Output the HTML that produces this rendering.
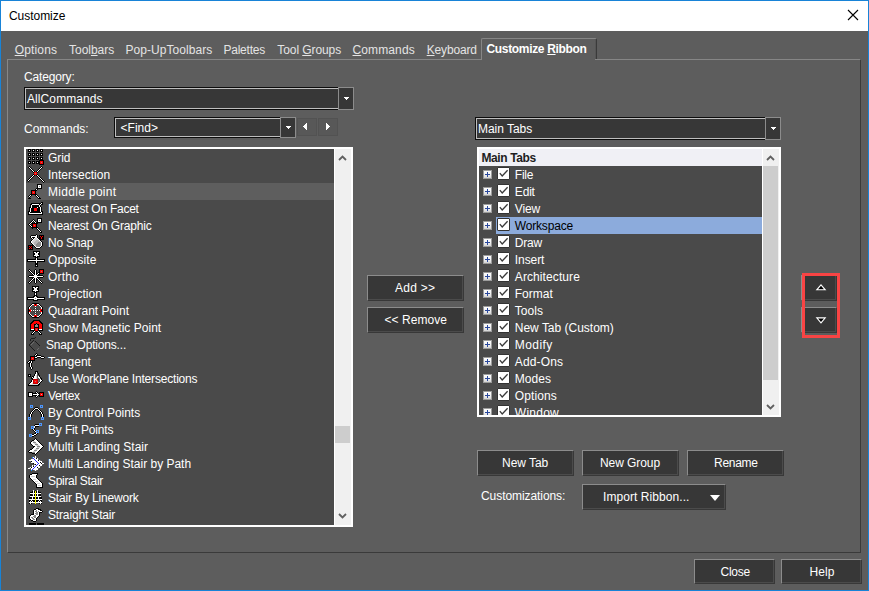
<!DOCTYPE html>
<html lang="en"><head><meta charset="utf-8"><title>Customize</title>
<style>
html,body{margin:0;padding:0;}
body{width:869px;height:591px;overflow:hidden;background:#5d5d5d;position:relative;
 font-family:"Liberation Sans",sans-serif;font-size:12px;color:#fff;}
*{box-sizing:border-box;}
.abs{position:absolute;}
.tx{position:absolute;white-space:nowrap;line-height:17px;height:17px;}
u{text-decoration:underline;text-underline-offset:1px;text-decoration-thickness:1px;}
.win{position:absolute;left:0;top:0;width:869px;height:591px;border:1px solid #1883d7;pointer-events:none;}
.title{position:absolute;left:1px;top:1px;width:867px;height:30px;background:#fff;color:#000;}
.combo{position:absolute;background:#373737;border:1px solid #0c0c0c;box-shadow:inset 0 0 0 1px #bebebe;}
.cbtn{position:absolute;background:#373737;border:1px solid #8c8c8c;}
.btn{position:absolute;background:#373737;border-style:solid;border-width:1px;border-color:#8c8c8c #383838 #383838 #8c8c8c;box-shadow:inset -1px -1px 0 #4b4b4b;}
.list{position:absolute;background:#4a4a4a;border:2px solid #fff;overflow:hidden;}
.row{position:absolute;left:0;height:17px;}
.sb{position:absolute;background:#f0f0f0;width:17px;box-shadow:inset 1px 0 0 #fff;}
.thumb{position:absolute;background:#cdcdcd;}
.tab{color:#e4e4e4;}
svg{position:absolute;overflow:visible;}
.ic{position:absolute;width:16px;height:16px;left:2px;top:0;}
.pm{position:absolute;width:9px;height:9px;border:1px solid #9c9c9c;background:linear-gradient(180deg,#fdfdfd 0%,#f0f0f0 55%,#d4d4d4 100%);}
.pm:before{content:"";position:absolute;left:1px;top:3px;width:5px;height:1px;background:#2a489c;}
.pm:after{content:"";position:absolute;left:3px;top:1px;width:1px;height:5px;background:#2a489c;}
.cb{position:absolute;width:13px;height:13px;border:1px solid #333;background:#fff;border-radius:1px;}
</style></head><body>

<div class="title"></div>
<span id="t1" class="tx " style="left:9px;top:8px;color:#000;letter-spacing:-0.044px;">Customize</span>
<svg style="left:848px;top:10px" width="10" height="10" viewBox="0 0 10 10"><path d="M0 0L10 10M10 0L0 10" stroke="#000" stroke-width="1.1" fill="none"/></svg>
<div class="abs" style="left:7px;top:59px;width:854px;height:494px;border-style:solid;border-width:1px;border-color:#868686 #3a3a3a #3a3a3a #868686;"></div>
<span id="t2" class="tx tab" style="left:14.7px;top:42px;letter-spacing:0.161px;"><u>O</u>ptions</span>
<span id="t3" class="tx tab" style="left:69.1px;top:42px;letter-spacing:-0.047px;">Tool<u>b</u>ars</span>
<span id="t4" class="tx tab" style="left:125.5px;top:42px;letter-spacing:0.060px;">Pop-UpToolbars</span>
<span id="t5" class="tx tab" style="left:223.4px;top:42px;letter-spacing:-0.208px;">Palettes</span>
<span id="t6" class="tx tab" style="left:277.3px;top:42px;letter-spacing:-0.083px;">Tool <u>G</u>roups</span>
<span id="t7" class="tx tab" style="left:352.5px;top:42px;letter-spacing:0.116px;"><u>C</u>ommands</span>
<span id="t8" class="tx tab" style="left:426.7px;top:42px;letter-spacing:-0.161px;"><u>K</u>eyboard</span>
<div class="abs" style="left:481px;top:38px;width:116px;height:21px;background:#5d5d5d;border-style:solid;border-width:1px 1px 0 1px;border-color:#868686 #3a3a3a #5d5d5d #868686;border-radius:2px 2px 0 0;box-shadow:inset -1px 0 0 #555;"></div>
<div class="abs" style="left:482px;top:59px;width:113px;height:1px;background:#5d5d5d;"></div>
<span id="t9" class="tx " style="left:486.5px;top:41px;font-weight:bold;letter-spacing:-0.329px;">Customize <u>R</u>ibbon</span>
<span id="t10" class="tx " style="left:24px;top:69px;letter-spacing:-0.160px;">Category:</span>
<div class="combo" style="left:24px;top:87px;width:322px;height:23px;"></div>
<span id="t11" class="tx " style="left:27px;top:91px;letter-spacing:0.092px;">AllCommands</span>
<div class="cbtn" style="left:338px;top:87px;width:16px;height:23px;"></div>
<svg style="left:344px;top:97px" width="5" height="3" viewBox="0 0 5 3" shape-rendering="crispEdges"><path d="M0 0H5V1H4V2H3V3H2V2H1V1H0Z" fill="#fff"/></svg>
<span id="t12" class="tx " style="left:24px;top:121px;letter-spacing:0.001px;">Commands:</span>
<div class="combo" style="left:114px;top:117px;width:174px;height:21px;"></div>
<span id="t13" class="tx " style="left:120.5px;top:120px;letter-spacing:0.039px;">&lt;Find&gt;</span>
<div class="cbtn" style="left:280px;top:117px;width:16px;height:21px;"></div>
<svg style="left:286px;top:126px" width="5" height="3" viewBox="0 0 5 3" shape-rendering="crispEdges"><path d="M0 0H5V1H4V2H3V3H2V2H1V1H0Z" fill="#fff"/></svg>
<div class="abs" style="left:297px;top:118px;width:20px;height:18px;background:#585858;border:1px solid #525252;"></div>
<div class="abs" style="left:318px;top:118px;width:20px;height:18px;background:#585858;border:1px solid #525252;"></div>
<svg style="left:303px;top:123px" width="4" height="7" viewBox="0 0 4 7" shape-rendering="crispEdges"><path d="M4 0V7H3V6H2V5H1V4H0V3H1V2H2V1H3V0Z" fill="#fff"/></svg>
<svg style="left:326px;top:123px" width="4" height="7" viewBox="0 0 4 7" shape-rendering="crispEdges"><path d="M0 0V7H1V6H2V5H3V4H4V3H3V2H2V1H1V0Z" fill="#fff"/></svg>
<div class="list" style="left:24px;top:147px;width:329px;height:380px;">
<div class="row" style="top:0px;width:308px;">
<div class="ic"><svg style="left:0;top:0" width="16" height="17" viewBox="0 0 16 17" shape-rendering="crispEdges"><rect x="0" y="0" width="3" height="1" fill="#000"/><rect x="4" y="0" width="3" height="1" fill="#000"/><rect x="8" y="0" width="3" height="1" fill="#000"/><rect x="12" y="0" width="3" height="1" fill="#000"/><rect x="0" y="1" width="1" height="1" fill="#000"/><rect x="1" y="1" width="1" height="1" fill="#fff"/><rect x="2" y="1" width="1" height="1" fill="#000"/><rect x="4" y="1" width="1" height="1" fill="#000"/><rect x="5" y="1" width="1" height="1" fill="#fff"/><rect x="6" y="1" width="1" height="1" fill="#000"/><rect x="8" y="1" width="1" height="1" fill="#000"/><rect x="9" y="1" width="1" height="1" fill="#fff"/><rect x="10" y="1" width="1" height="1" fill="#000"/><rect x="12" y="1" width="1" height="1" fill="#000"/><rect x="13" y="1" width="1" height="1" fill="#fff"/><rect x="14" y="1" width="1" height="1" fill="#000"/><rect x="0" y="2" width="3" height="1" fill="#000"/><rect x="4" y="2" width="3" height="1" fill="#000"/><rect x="8" y="2" width="3" height="1" fill="#000"/><rect x="12" y="2" width="3" height="1" fill="#000"/><rect x="0" y="4" width="3" height="1" fill="#000"/><rect x="4" y="4" width="3" height="1" fill="#000"/><rect x="8" y="4" width="3" height="1" fill="#000"/><rect x="12" y="4" width="3" height="1" fill="#000"/><rect x="0" y="5" width="1" height="1" fill="#000"/><rect x="1" y="5" width="1" height="1" fill="#fff"/><rect x="2" y="5" width="1" height="1" fill="#000"/><rect x="4" y="5" width="1" height="1" fill="#000"/><rect x="5" y="5" width="1" height="1" fill="#fff"/><rect x="6" y="5" width="1" height="1" fill="#000"/><rect x="8" y="5" width="1" height="1" fill="#000"/><rect x="9" y="5" width="1" height="1" fill="#fff"/><rect x="10" y="5" width="1" height="1" fill="#000"/><rect x="12" y="5" width="1" height="1" fill="#000"/><rect x="13" y="5" width="1" height="1" fill="#fff"/><rect x="14" y="5" width="1" height="1" fill="#000"/><rect x="0" y="6" width="3" height="1" fill="#000"/><rect x="4" y="6" width="3" height="1" fill="#000"/><rect x="8" y="6" width="3" height="1" fill="#000"/><rect x="12" y="6" width="3" height="1" fill="#000"/><rect x="0" y="8" width="3" height="1" fill="#000"/><rect x="4" y="8" width="3" height="1" fill="#000"/><rect x="8" y="8" width="3" height="1" fill="#000"/><rect x="12" y="8" width="3" height="1" fill="#000"/><rect x="0" y="9" width="1" height="1" fill="#000"/><rect x="1" y="9" width="1" height="1" fill="#fff"/><rect x="2" y="9" width="1" height="1" fill="#000"/><rect x="4" y="9" width="1" height="1" fill="#000"/><rect x="5" y="9" width="1" height="1" fill="#fff"/><rect x="6" y="9" width="1" height="1" fill="#000"/><rect x="8" y="9" width="1" height="1" fill="#000"/><rect x="9" y="9" width="1" height="1" fill="#fff"/><rect x="10" y="9" width="1" height="1" fill="#000"/><rect x="12" y="9" width="1" height="1" fill="#000"/><rect x="13" y="9" width="1" height="1" fill="#fff"/><rect x="14" y="9" width="1" height="1" fill="#000"/><rect x="0" y="10" width="3" height="1" fill="#000"/><rect x="4" y="10" width="3" height="1" fill="#000"/><rect x="8" y="10" width="3" height="1" fill="#000"/><rect x="12" y="10" width="3" height="1" fill="#000"/><rect x="11" y="11" width="5" height="1" fill="#000"/><rect x="0" y="12" width="3" height="1" fill="#000"/><rect x="4" y="12" width="3" height="1" fill="#000"/><rect x="8" y="12" width="4" height="1" fill="#000"/><rect x="12" y="12" width="3" height="1" fill="#f00"/><rect x="15" y="12" width="1" height="1" fill="#000"/><rect x="0" y="13" width="1" height="1" fill="#000"/><rect x="1" y="13" width="1" height="1" fill="#fff"/><rect x="2" y="13" width="1" height="1" fill="#000"/><rect x="4" y="13" width="1" height="1" fill="#000"/><rect x="5" y="13" width="1" height="1" fill="#fff"/><rect x="6" y="13" width="1" height="1" fill="#000"/><rect x="8" y="13" width="1" height="1" fill="#000"/><rect x="9" y="13" width="1" height="1" fill="#fff"/><rect x="10" y="13" width="2" height="1" fill="#000"/><rect x="12" y="13" width="1" height="1" fill="#f00"/><rect x="13" y="13" width="1" height="1" fill="#8a8a8a"/><rect x="14" y="13" width="1" height="1" fill="#f00"/><rect x="15" y="13" width="1" height="1" fill="#000"/><rect x="0" y="14" width="3" height="1" fill="#000"/><rect x="4" y="14" width="3" height="1" fill="#000"/><rect x="8" y="14" width="4" height="1" fill="#000"/><rect x="12" y="14" width="3" height="1" fill="#f00"/><rect x="15" y="14" width="1" height="1" fill="#000"/><rect x="11" y="15" width="5" height="1" fill="#000"/></svg></div>
<span id="t14" class="tx " style="left:22.0px;top:1px;letter-spacing:-0.096px;">Grid</span>
</div>
<div class="row" style="top:17px;width:308px;">
<div class="ic"><svg style="left:0;top:0" width="16" height="17" viewBox="0 0 16 17" shape-rendering="crispEdges"><rect x="1" y="0" width="1" height="1" fill="#000"/><rect x="13" y="0" width="1" height="1" fill="#000"/><rect x="0" y="1" width="1" height="1" fill="#000"/><rect x="1" y="1" width="1" height="1" fill="#fff"/><rect x="2" y="1" width="1" height="1" fill="#000"/><rect x="12" y="1" width="1" height="1" fill="#000"/><rect x="13" y="1" width="1" height="1" fill="#fff"/><rect x="14" y="1" width="1" height="1" fill="#000"/><rect x="1" y="2" width="1" height="1" fill="#000"/><rect x="2" y="2" width="1" height="1" fill="#fff"/><rect x="3" y="2" width="1" height="1" fill="#000"/><rect x="11" y="2" width="1" height="1" fill="#000"/><rect x="12" y="2" width="1" height="1" fill="#fff"/><rect x="13" y="2" width="1" height="1" fill="#000"/><rect x="2" y="3" width="1" height="1" fill="#000"/><rect x="3" y="3" width="1" height="1" fill="#fff"/><rect x="4" y="3" width="1" height="1" fill="#000"/><rect x="10" y="3" width="1" height="1" fill="#000"/><rect x="11" y="3" width="1" height="1" fill="#fff"/><rect x="12" y="3" width="1" height="1" fill="#000"/><rect x="3" y="4" width="1" height="1" fill="#000"/><rect x="4" y="4" width="1" height="1" fill="#fff"/><rect x="5" y="4" width="1" height="1" fill="#000"/><rect x="9" y="4" width="1" height="1" fill="#000"/><rect x="10" y="4" width="1" height="1" fill="#fff"/><rect x="11" y="4" width="1" height="1" fill="#000"/><rect x="4" y="5" width="1" height="1" fill="#000"/><rect x="5" y="5" width="1" height="1" fill="#fff"/><rect x="6" y="5" width="1" height="1" fill="#000"/><rect x="8" y="5" width="1" height="1" fill="#000"/><rect x="9" y="5" width="1" height="1" fill="#fff"/><rect x="10" y="5" width="1" height="1" fill="#000"/><rect x="5" y="6" width="1" height="1" fill="#000"/><rect x="6" y="6" width="3" height="1" fill="#f00"/><rect x="9" y="6" width="1" height="1" fill="#000"/><rect x="6" y="7" width="1" height="1" fill="#f00"/><rect x="7" y="7" width="1" height="1" fill="#8a8a8a"/><rect x="8" y="7" width="1" height="1" fill="#f00"/><rect x="5" y="8" width="1" height="1" fill="#000"/><rect x="6" y="8" width="3" height="1" fill="#f00"/><rect x="9" y="8" width="1" height="1" fill="#000"/><rect x="4" y="9" width="1" height="1" fill="#000"/><rect x="5" y="9" width="1" height="1" fill="#fff"/><rect x="6" y="9" width="1" height="1" fill="#000"/><rect x="8" y="9" width="1" height="1" fill="#000"/><rect x="9" y="9" width="1" height="1" fill="#fff"/><rect x="10" y="9" width="1" height="1" fill="#000"/><rect x="3" y="10" width="1" height="1" fill="#000"/><rect x="4" y="10" width="1" height="1" fill="#fff"/><rect x="5" y="10" width="1" height="1" fill="#000"/><rect x="9" y="10" width="1" height="1" fill="#000"/><rect x="10" y="10" width="1" height="1" fill="#fff"/><rect x="11" y="10" width="1" height="1" fill="#000"/><rect x="2" y="11" width="1" height="1" fill="#000"/><rect x="3" y="11" width="1" height="1" fill="#fff"/><rect x="4" y="11" width="1" height="1" fill="#000"/><rect x="10" y="11" width="1" height="1" fill="#000"/><rect x="11" y="11" width="1" height="1" fill="#fff"/><rect x="12" y="11" width="1" height="1" fill="#000"/><rect x="1" y="12" width="1" height="1" fill="#000"/><rect x="2" y="12" width="1" height="1" fill="#fff"/><rect x="3" y="12" width="1" height="1" fill="#000"/><rect x="11" y="12" width="1" height="1" fill="#000"/><rect x="12" y="12" width="1" height="1" fill="#fff"/><rect x="13" y="12" width="1" height="1" fill="#000"/><rect x="0" y="13" width="1" height="1" fill="#000"/><rect x="1" y="13" width="1" height="1" fill="#fff"/><rect x="2" y="13" width="1" height="1" fill="#000"/><rect x="12" y="13" width="1" height="1" fill="#000"/><rect x="13" y="13" width="1" height="1" fill="#fff"/><rect x="14" y="13" width="1" height="1" fill="#000"/><rect x="-1" y="14" width="1" height="1" fill="#000"/><rect x="0" y="14" width="1" height="1" fill="#fff"/><rect x="1" y="14" width="1" height="1" fill="#000"/><rect x="13" y="14" width="1" height="1" fill="#000"/><rect x="14" y="14" width="1" height="1" fill="#fff"/><rect x="15" y="14" width="1" height="1" fill="#000"/><rect x="0" y="15" width="1" height="1" fill="#000"/><rect x="14" y="15" width="1" height="1" fill="#000"/><rect x="15" y="15" width="1" height="1" fill="#fff"/><rect x="16" y="15" width="1" height="1" fill="#000"/><rect x="15" y="16" width="1" height="1" fill="#000"/></svg></div>
<span id="t15" class="tx " style="left:22.0px;top:1px;letter-spacing:0.005px;">Intersection</span>
</div>
<div class="row" style="top:34px;width:308px;background:#5e5e5e;">
<div class="ic"><svg style="left:0;top:0" width="16" height="17" viewBox="0 0 16 17" shape-rendering="crispEdges"><rect x="9" y="1" width="5" height="1" fill="#000"/><rect x="9" y="2" width="1" height="1" fill="#000"/><rect x="10" y="2" width="3" height="1" fill="#fff"/><rect x="13" y="2" width="1" height="1" fill="#000"/><rect x="9" y="3" width="1" height="1" fill="#000"/><rect x="10" y="3" width="1" height="1" fill="#fff"/><rect x="11" y="3" width="1" height="1" fill="#8a8a8a"/><rect x="12" y="3" width="1" height="1" fill="#fff"/><rect x="13" y="3" width="1" height="1" fill="#000"/><rect x="9" y="4" width="1" height="1" fill="#000"/><rect x="10" y="4" width="3" height="1" fill="#fff"/><rect x="13" y="4" width="1" height="1" fill="#000"/><rect x="8" y="5" width="6" height="1" fill="#000"/><rect x="7" y="6" width="1" height="1" fill="#000"/><rect x="8" y="6" width="1" height="1" fill="#fff"/><rect x="9" y="6" width="1" height="1" fill="#000"/><rect x="3" y="7" width="6" height="1" fill="#000"/><rect x="3" y="8" width="1" height="1" fill="#000"/><rect x="4" y="8" width="3" height="1" fill="#f00"/><rect x="7" y="8" width="1" height="1" fill="#000"/><rect x="3" y="9" width="1" height="1" fill="#000"/><rect x="4" y="9" width="1" height="1" fill="#f00"/><rect x="5" y="9" width="1" height="1" fill="#8a8a8a"/><rect x="6" y="9" width="1" height="1" fill="#f00"/><rect x="7" y="9" width="1" height="1" fill="#000"/><rect x="3" y="10" width="1" height="1" fill="#000"/><rect x="4" y="10" width="3" height="1" fill="#f00"/><rect x="7" y="10" width="1" height="1" fill="#000"/><rect x="2" y="11" width="7" height="1" fill="#000"/><rect x="1" y="12" width="1" height="1" fill="#000"/><rect x="2" y="12" width="1" height="1" fill="#fff"/><rect x="3" y="12" width="1" height="1" fill="#000"/><rect x="7" y="12" width="1" height="1" fill="#000"/><rect x="8" y="12" width="1" height="1" fill="#fff"/><rect x="9" y="12" width="1" height="1" fill="#000"/><rect x="0" y="13" width="1" height="1" fill="#000"/><rect x="1" y="13" width="1" height="1" fill="#fff"/><rect x="2" y="13" width="1" height="1" fill="#000"/><rect x="8" y="13" width="1" height="1" fill="#000"/><rect x="9" y="13" width="1" height="1" fill="#fff"/><rect x="10" y="13" width="1" height="1" fill="#000"/><rect x="1" y="14" width="1" height="1" fill="#000"/><rect x="9" y="14" width="1" height="1" fill="#000"/><rect x="10" y="14" width="1" height="1" fill="#fff"/><rect x="11" y="14" width="1" height="1" fill="#000"/><rect x="0" y="15" width="3" height="1" fill="#000"/><rect x="10" y="15" width="3" height="1" fill="#000"/></svg></div>
<span id="t16" class="tx " style="left:22.0px;top:1px;letter-spacing:0.315px;">Middle point</span>
</div>
<div class="row" style="top:51px;width:308px;">
<div class="ic"><svg style="left:0;top:0" width="16" height="17" viewBox="0 0 16 17" shape-rendering="crispEdges"><rect x="13" y="2" width="2" height="1" fill="#000"/><rect x="3" y="3" width="10" height="1" fill="#000"/><rect x="13" y="3" width="1" height="1" fill="#fff"/><rect x="14" y="3" width="1" height="1" fill="#000"/><rect x="2" y="4" width="2" height="1" fill="#000"/><rect x="4" y="4" width="7" height="1" fill="#fff"/><rect x="11" y="4" width="1" height="1" fill="#000"/><rect x="12" y="4" width="1" height="1" fill="#fff"/><rect x="13" y="4" width="2" height="1" fill="#000"/><rect x="2" y="5" width="1" height="1" fill="#000"/><rect x="3" y="5" width="1" height="1" fill="#fff"/><rect x="4" y="5" width="7" height="1" fill="#000"/><rect x="11" y="5" width="1" height="1" fill="#fff"/><rect x="12" y="5" width="1" height="1" fill="#000"/><rect x="2" y="6" width="1" height="1" fill="#000"/><rect x="3" y="6" width="1" height="1" fill="#fff"/><rect x="4" y="6" width="7" height="1" fill="#000"/><rect x="11" y="6" width="1" height="1" fill="#fff"/><rect x="12" y="6" width="1" height="1" fill="#000"/><rect x="1" y="7" width="2" height="1" fill="#000"/><rect x="3" y="7" width="1" height="1" fill="#fff"/><rect x="4" y="7" width="5" height="1" fill="#000"/><rect x="9" y="7" width="1" height="1" fill="#fff"/><rect x="10" y="7" width="2" height="1" fill="#000"/><rect x="12" y="7" width="1" height="1" fill="#fff"/><rect x="13" y="7" width="1" height="1" fill="#000"/><rect x="1" y="8" width="1" height="1" fill="#000"/><rect x="2" y="8" width="1" height="1" fill="#fff"/><rect x="3" y="8" width="3" height="1" fill="#000"/><rect x="6" y="8" width="3" height="1" fill="#f00"/><rect x="9" y="8" width="3" height="1" fill="#000"/><rect x="12" y="8" width="1" height="1" fill="#fff"/><rect x="13" y="8" width="1" height="1" fill="#000"/><rect x="1" y="9" width="1" height="1" fill="#000"/><rect x="2" y="9" width="1" height="1" fill="#fff"/><rect x="3" y="9" width="3" height="1" fill="#000"/><rect x="6" y="9" width="3" height="1" fill="#f00"/><rect x="9" y="9" width="3" height="1" fill="#000"/><rect x="12" y="9" width="1" height="1" fill="#fff"/><rect x="13" y="9" width="1" height="1" fill="#000"/><rect x="1" y="10" width="1" height="1" fill="#000"/><rect x="2" y="10" width="1" height="1" fill="#fff"/><rect x="3" y="10" width="3" height="1" fill="#000"/><rect x="6" y="10" width="3" height="1" fill="#f00"/><rect x="9" y="10" width="3" height="1" fill="#000"/><rect x="12" y="10" width="1" height="1" fill="#fff"/><rect x="13" y="10" width="1" height="1" fill="#000"/><rect x="0" y="11" width="2" height="1" fill="#000"/><rect x="2" y="11" width="1" height="1" fill="#fff"/><rect x="3" y="11" width="9" height="1" fill="#000"/><rect x="12" y="11" width="1" height="1" fill="#fff"/><rect x="13" y="11" width="2" height="1" fill="#000"/><rect x="0" y="12" width="1" height="1" fill="#000"/><rect x="1" y="12" width="1" height="1" fill="#fff"/><rect x="2" y="12" width="11" height="1" fill="#000"/><rect x="13" y="12" width="1" height="1" fill="#fff"/><rect x="14" y="12" width="1" height="1" fill="#000"/><rect x="0" y="13" width="1" height="1" fill="#000"/><rect x="1" y="13" width="13" height="1" fill="#fff"/><rect x="14" y="13" width="1" height="1" fill="#000"/><rect x="0" y="14" width="15" height="1" fill="#000"/></svg></div>
<span id="t17" class="tx " style="left:22.0px;top:1px;letter-spacing:-0.250px;">Nearest On Facet</span>
</div>
<div class="row" style="top:68px;width:308px;">
<div class="ic"><svg style="left:0;top:0" width="16" height="17" viewBox="0 0 16 17" shape-rendering="crispEdges"><rect x="9" y="1" width="5" height="1" fill="#000"/><rect x="5" y="2" width="1" height="1" fill="#000"/><rect x="9" y="2" width="1" height="1" fill="#000"/><rect x="10" y="2" width="3" height="1" fill="#fff"/><rect x="13" y="2" width="1" height="1" fill="#000"/><rect x="4" y="3" width="1" height="1" fill="#000"/><rect x="5" y="3" width="1" height="1" fill="#fff"/><rect x="6" y="3" width="1" height="1" fill="#000"/><rect x="9" y="3" width="1" height="1" fill="#000"/><rect x="10" y="3" width="1" height="1" fill="#fff"/><rect x="11" y="3" width="1" height="1" fill="#8a8a8a"/><rect x="12" y="3" width="1" height="1" fill="#fff"/><rect x="13" y="3" width="1" height="1" fill="#000"/><rect x="3" y="4" width="1" height="1" fill="#000"/><rect x="4" y="4" width="1" height="1" fill="#fff"/><rect x="5" y="4" width="1" height="1" fill="#000"/><rect x="6" y="4" width="1" height="1" fill="#fff"/><rect x="7" y="4" width="1" height="1" fill="#000"/><rect x="9" y="4" width="1" height="1" fill="#000"/><rect x="10" y="4" width="3" height="1" fill="#fff"/><rect x="13" y="4" width="1" height="1" fill="#000"/><rect x="2" y="5" width="1" height="1" fill="#000"/><rect x="3" y="5" width="1" height="1" fill="#fff"/><rect x="4" y="5" width="1" height="1" fill="#000"/><rect x="6" y="5" width="1" height="1" fill="#000"/><rect x="7" y="5" width="1" height="1" fill="#fff"/><rect x="8" y="5" width="6" height="1" fill="#000"/><rect x="1" y="6" width="1" height="1" fill="#000"/><rect x="2" y="6" width="1" height="1" fill="#fff"/><rect x="3" y="6" width="7" height="1" fill="#000"/><rect x="0" y="7" width="1" height="1" fill="#000"/><rect x="1" y="7" width="1" height="1" fill="#fff"/><rect x="2" y="7" width="1" height="1" fill="#000"/><rect x="4" y="7" width="1" height="1" fill="#000"/><rect x="5" y="7" width="3" height="1" fill="#f00"/><rect x="8" y="7" width="1" height="1" fill="#000"/><rect x="1" y="8" width="1" height="1" fill="#000"/><rect x="2" y="8" width="1" height="1" fill="#fff"/><rect x="3" y="8" width="2" height="1" fill="#000"/><rect x="5" y="8" width="1" height="1" fill="#f00"/><rect x="6" y="8" width="1" height="1" fill="#8a8a8a"/><rect x="7" y="8" width="1" height="1" fill="#f00"/><rect x="8" y="8" width="1" height="1" fill="#000"/><rect x="2" y="9" width="1" height="1" fill="#000"/><rect x="3" y="9" width="1" height="1" fill="#fff"/><rect x="4" y="9" width="1" height="1" fill="#000"/><rect x="5" y="9" width="3" height="1" fill="#f00"/><rect x="8" y="9" width="1" height="1" fill="#000"/><rect x="3" y="10" width="7" height="1" fill="#000"/><rect x="4" y="11" width="1" height="1" fill="#000"/><rect x="8" y="11" width="1" height="1" fill="#000"/><rect x="9" y="11" width="1" height="1" fill="#fff"/><rect x="10" y="11" width="1" height="1" fill="#000"/><rect x="9" y="12" width="1" height="1" fill="#000"/><rect x="10" y="12" width="1" height="1" fill="#fff"/><rect x="11" y="12" width="1" height="1" fill="#000"/><rect x="10" y="13" width="1" height="1" fill="#000"/><rect x="11" y="13" width="1" height="1" fill="#fff"/><rect x="12" y="13" width="1" height="1" fill="#000"/><rect x="11" y="14" width="1" height="1" fill="#000"/><rect x="12" y="14" width="1" height="1" fill="#fff"/><rect x="13" y="14" width="1" height="1" fill="#000"/><rect x="12" y="15" width="2" height="1" fill="#000"/></svg></div>
<span id="t18" class="tx " style="left:22.0px;top:1px;letter-spacing:-0.179px;">Nearest On Graphic</span>
</div>
<div class="row" style="top:85px;width:308px;">
<div class="ic"><svg style="left:0;top:0" width="16" height="17" viewBox="0 0 16 17" shape-rendering="crispEdges"><rect x="8" y="0" width="1" height="1" fill="#000"/><rect x="3" y="1" width="5" height="1" fill="#000"/><rect x="8" y="1" width="1" height="1" fill="#fff"/><rect x="9" y="1" width="1" height="1" fill="#000"/><rect x="11" y="1" width="5" height="1" fill="#000"/><rect x="2" y="2" width="1" height="1" fill="#000"/><rect x="3" y="2" width="6" height="1" fill="#fff"/><rect x="9" y="2" width="1" height="1" fill="#000"/><rect x="11" y="2" width="1" height="1" fill="#000"/><rect x="12" y="2" width="1" height="1" fill="#f00"/><rect x="13" y="2" width="1" height="1" fill="#000"/><rect x="14" y="2" width="1" height="1" fill="#f00"/><rect x="15" y="2" width="1" height="1" fill="#000"/><rect x="2" y="3" width="1" height="1" fill="#000"/><rect x="3" y="3" width="1" height="1" fill="#fff"/><rect x="4" y="3" width="3" height="1" fill="#000"/><rect x="7" y="3" width="2" height="1" fill="#fff"/><rect x="9" y="3" width="1" height="1" fill="#000"/><rect x="11" y="3" width="2" height="1" fill="#000"/><rect x="13" y="3" width="1" height="1" fill="#f00"/><rect x="14" y="3" width="2" height="1" fill="#000"/><rect x="3" y="4" width="1" height="1" fill="#000"/><rect x="4" y="4" width="1" height="1" fill="#fff"/><rect x="5" y="4" width="1" height="1" fill="#000"/><rect x="6" y="4" width="1" height="1" fill="#fff"/><rect x="7" y="4" width="2" height="1" fill="#d2d2d2"/><rect x="9" y="4" width="1" height="1" fill="#fff"/><rect x="10" y="4" width="3" height="1" fill="#000"/><rect x="13" y="4" width="1" height="1" fill="#f00"/><rect x="14" y="4" width="2" height="1" fill="#000"/><rect x="4" y="5" width="1" height="1" fill="#000"/><rect x="5" y="5" width="1" height="1" fill="#fff"/><rect x="6" y="5" width="4" height="1" fill="#d2d2d2"/><rect x="10" y="5" width="1" height="1" fill="#fff"/><rect x="11" y="5" width="5" height="1" fill="#000"/><rect x="3" y="6" width="1" height="1" fill="#000"/><rect x="4" y="6" width="1" height="1" fill="#fff"/><rect x="5" y="6" width="3" height="1" fill="#d2d2d2"/><rect x="8" y="6" width="3" height="1" fill="#b4b4b4"/><rect x="11" y="6" width="1" height="1" fill="#fff"/><rect x="12" y="6" width="1" height="1" fill="#000"/><rect x="2" y="7" width="1" height="1" fill="#000"/><rect x="3" y="7" width="1" height="1" fill="#fff"/><rect x="4" y="7" width="3" height="1" fill="#d2d2d2"/><rect x="7" y="7" width="5" height="1" fill="#b4b4b4"/><rect x="12" y="7" width="1" height="1" fill="#fff"/><rect x="13" y="7" width="1" height="1" fill="#000"/><rect x="2" y="8" width="1" height="1" fill="#000"/><rect x="3" y="8" width="1" height="1" fill="#fff"/><rect x="4" y="8" width="2" height="1" fill="#d2d2d2"/><rect x="6" y="8" width="4" height="1" fill="#b4b4b4"/><rect x="10" y="8" width="3" height="1" fill="#8a8a8a"/><rect x="13" y="8" width="1" height="1" fill="#fff"/><rect x="14" y="8" width="1" height="1" fill="#000"/><rect x="3" y="9" width="1" height="1" fill="#000"/><rect x="4" y="9" width="1" height="1" fill="#fff"/><rect x="5" y="9" width="1" height="1" fill="#d2d2d2"/><rect x="6" y="9" width="3" height="1" fill="#b4b4b4"/><rect x="9" y="9" width="4" height="1" fill="#8a8a8a"/><rect x="13" y="9" width="1" height="1" fill="#fff"/><rect x="14" y="9" width="1" height="1" fill="#000"/><rect x="4" y="10" width="1" height="1" fill="#000"/><rect x="5" y="10" width="1" height="1" fill="#fff"/><rect x="6" y="10" width="2" height="1" fill="#b4b4b4"/><rect x="8" y="10" width="5" height="1" fill="#8a8a8a"/><rect x="13" y="10" width="1" height="1" fill="#fff"/><rect x="14" y="10" width="1" height="1" fill="#000"/><rect x="0" y="11" width="6" height="1" fill="#000"/><rect x="6" y="11" width="1" height="1" fill="#fff"/><rect x="7" y="11" width="1" height="1" fill="#b4b4b4"/><rect x="8" y="11" width="5" height="1" fill="#8a8a8a"/><rect x="13" y="11" width="1" height="1" fill="#fff"/><rect x="14" y="11" width="1" height="1" fill="#000"/><rect x="0" y="12" width="1" height="1" fill="#000"/><rect x="1" y="12" width="1" height="1" fill="#f00"/><rect x="2" y="12" width="1" height="1" fill="#000"/><rect x="3" y="12" width="1" height="1" fill="#f00"/><rect x="4" y="12" width="1" height="1" fill="#000"/><rect x="6" y="12" width="1" height="1" fill="#000"/><rect x="7" y="12" width="1" height="1" fill="#fff"/><rect x="8" y="12" width="4" height="1" fill="#8a8a8a"/><rect x="12" y="12" width="1" height="1" fill="#fff"/><rect x="13" y="12" width="1" height="1" fill="#000"/><rect x="0" y="13" width="2" height="1" fill="#000"/><rect x="2" y="13" width="1" height="1" fill="#f00"/><rect x="3" y="13" width="2" height="1" fill="#000"/><rect x="7" y="13" width="1" height="1" fill="#000"/><rect x="8" y="13" width="4" height="1" fill="#fff"/><rect x="12" y="13" width="1" height="1" fill="#000"/><rect x="0" y="14" width="1" height="1" fill="#000"/><rect x="1" y="14" width="1" height="1" fill="#f00"/><rect x="2" y="14" width="1" height="1" fill="#000"/><rect x="3" y="14" width="1" height="1" fill="#f00"/><rect x="4" y="14" width="1" height="1" fill="#000"/><rect x="8" y="14" width="4" height="1" fill="#000"/><rect x="0" y="15" width="5" height="1" fill="#000"/></svg></div>
<span id="t19" class="tx " style="left:22.0px;top:1px;letter-spacing:-0.228px;">No Snap</span>
</div>
<div class="row" style="top:102px;width:308px;">
<div class="ic"><svg style="left:0;top:0" width="16" height="17" viewBox="0 0 16 17" shape-rendering="crispEdges"><rect x="5" y="0" width="7" height="1" fill="#000"/><rect x="5" y="1" width="1" height="1" fill="#000"/><rect x="6" y="1" width="2" height="1" fill="#fff"/><rect x="8" y="1" width="1" height="1" fill="#000"/><rect x="9" y="1" width="2" height="1" fill="#fff"/><rect x="11" y="1" width="1" height="1" fill="#000"/><rect x="5" y="2" width="2" height="1" fill="#000"/><rect x="7" y="2" width="3" height="1" fill="#fff"/><rect x="10" y="2" width="2" height="1" fill="#000"/><rect x="5" y="3" width="2" height="1" fill="#000"/><rect x="7" y="3" width="3" height="1" fill="#fff"/><rect x="10" y="3" width="2" height="1" fill="#000"/><rect x="5" y="4" width="1" height="1" fill="#000"/><rect x="6" y="4" width="5" height="1" fill="#fff"/><rect x="11" y="4" width="1" height="1" fill="#000"/><rect x="5" y="5" width="3" height="1" fill="#000"/><rect x="8" y="5" width="1" height="1" fill="#fff"/><rect x="9" y="5" width="3" height="1" fill="#000"/><rect x="7" y="6" width="3" height="1" fill="#000"/><rect x="7" y="7" width="1" height="1" fill="#000"/><rect x="8" y="7" width="1" height="1" fill="#fff"/><rect x="9" y="7" width="1" height="1" fill="#000"/><rect x="-1" y="8" width="9" height="1" fill="#000"/><rect x="8" y="8" width="1" height="1" fill="#fff"/><rect x="9" y="8" width="8" height="1" fill="#000"/><rect x="-1" y="9" width="1" height="1" fill="#000"/><rect x="0" y="9" width="16" height="1" fill="#fff"/><rect x="16" y="9" width="1" height="1" fill="#000"/><rect x="-1" y="10" width="9" height="1" fill="#000"/><rect x="8" y="10" width="1" height="1" fill="#fff"/><rect x="9" y="10" width="8" height="1" fill="#000"/><rect x="7" y="11" width="1" height="1" fill="#000"/><rect x="8" y="11" width="1" height="1" fill="#fff"/><rect x="9" y="11" width="1" height="1" fill="#000"/><rect x="7" y="12" width="3" height="1" fill="#000"/><rect x="7" y="13" width="3" height="1" fill="#000"/><rect x="7" y="14" width="1" height="1" fill="#000"/><rect x="8" y="14" width="1" height="1" fill="#fff"/><rect x="9" y="14" width="1" height="1" fill="#000"/><rect x="7" y="15" width="3" height="1" fill="#000"/></svg></div>
<span id="t20" class="tx " style="left:22.0px;top:1px;letter-spacing:0.045px;">Opposite</span>
</div>
<div class="row" style="top:119px;width:308px;">
<div class="ic"><svg style="left:0;top:0" width="16" height="17" viewBox="0 0 16 17" shape-rendering="crispEdges"><rect x="1" y="1" width="1" height="1" fill="#000"/><rect x="7" y="1" width="1" height="1" fill="#000"/><rect x="11" y="1" width="5" height="1" fill="#000"/><rect x="0" y="2" width="1" height="1" fill="#000"/><rect x="1" y="2" width="1" height="1" fill="#fff"/><rect x="2" y="2" width="1" height="1" fill="#000"/><rect x="6" y="2" width="1" height="1" fill="#000"/><rect x="7" y="2" width="1" height="1" fill="#fff"/><rect x="8" y="2" width="1" height="1" fill="#000"/><rect x="11" y="2" width="1" height="1" fill="#000"/><rect x="12" y="2" width="3" height="1" fill="#f00"/><rect x="15" y="2" width="1" height="1" fill="#000"/><rect x="1" y="3" width="1" height="1" fill="#000"/><rect x="2" y="3" width="1" height="1" fill="#fff"/><rect x="3" y="3" width="1" height="1" fill="#000"/><rect x="6" y="3" width="1" height="1" fill="#000"/><rect x="7" y="3" width="1" height="1" fill="#fff"/><rect x="8" y="3" width="1" height="1" fill="#000"/><rect x="11" y="3" width="1" height="1" fill="#000"/><rect x="12" y="3" width="1" height="1" fill="#f00"/><rect x="13" y="3" width="1" height="1" fill="#8a8a8a"/><rect x="14" y="3" width="1" height="1" fill="#f00"/><rect x="15" y="3" width="1" height="1" fill="#000"/><rect x="2" y="4" width="1" height="1" fill="#000"/><rect x="3" y="4" width="1" height="1" fill="#fff"/><rect x="4" y="4" width="1" height="1" fill="#000"/><rect x="6" y="4" width="1" height="1" fill="#000"/><rect x="7" y="4" width="1" height="1" fill="#fff"/><rect x="8" y="4" width="1" height="1" fill="#000"/><rect x="10" y="4" width="2" height="1" fill="#000"/><rect x="12" y="4" width="3" height="1" fill="#f00"/><rect x="15" y="4" width="1" height="1" fill="#000"/><rect x="3" y="5" width="1" height="1" fill="#000"/><rect x="4" y="5" width="1" height="1" fill="#fff"/><rect x="5" y="5" width="2" height="1" fill="#000"/><rect x="7" y="5" width="1" height="1" fill="#fff"/><rect x="8" y="5" width="2" height="1" fill="#000"/><rect x="10" y="5" width="1" height="1" fill="#fff"/><rect x="11" y="5" width="5" height="1" fill="#000"/><rect x="4" y="6" width="1" height="1" fill="#000"/><rect x="5" y="6" width="1" height="1" fill="#fff"/><rect x="6" y="6" width="1" height="1" fill="#000"/><rect x="7" y="6" width="1" height="1" fill="#fff"/><rect x="8" y="6" width="1" height="1" fill="#000"/><rect x="9" y="6" width="1" height="1" fill="#fff"/><rect x="10" y="6" width="2" height="1" fill="#000"/><rect x="1" y="7" width="5" height="1" fill="#000"/><rect x="6" y="7" width="3" height="1" fill="#fff"/><rect x="9" y="7" width="6" height="1" fill="#000"/><rect x="0" y="8" width="1" height="1" fill="#000"/><rect x="1" y="8" width="14" height="1" fill="#fff"/><rect x="15" y="8" width="1" height="1" fill="#000"/><rect x="1" y="9" width="5" height="1" fill="#000"/><rect x="6" y="9" width="3" height="1" fill="#fff"/><rect x="9" y="9" width="6" height="1" fill="#000"/><rect x="4" y="10" width="1" height="1" fill="#000"/><rect x="5" y="10" width="1" height="1" fill="#fff"/><rect x="6" y="10" width="1" height="1" fill="#000"/><rect x="7" y="10" width="1" height="1" fill="#fff"/><rect x="8" y="10" width="1" height="1" fill="#000"/><rect x="9" y="10" width="1" height="1" fill="#fff"/><rect x="10" y="10" width="1" height="1" fill="#000"/><rect x="3" y="11" width="1" height="1" fill="#000"/><rect x="4" y="11" width="1" height="1" fill="#fff"/><rect x="5" y="11" width="2" height="1" fill="#000"/><rect x="7" y="11" width="1" height="1" fill="#fff"/><rect x="8" y="11" width="2" height="1" fill="#000"/><rect x="10" y="11" width="1" height="1" fill="#fff"/><rect x="11" y="11" width="1" height="1" fill="#000"/><rect x="2" y="12" width="1" height="1" fill="#000"/><rect x="3" y="12" width="1" height="1" fill="#fff"/><rect x="4" y="12" width="1" height="1" fill="#000"/><rect x="6" y="12" width="1" height="1" fill="#000"/><rect x="7" y="12" width="1" height="1" fill="#fff"/><rect x="8" y="12" width="1" height="1" fill="#000"/><rect x="10" y="12" width="1" height="1" fill="#000"/><rect x="11" y="12" width="1" height="1" fill="#fff"/><rect x="12" y="12" width="1" height="1" fill="#000"/><rect x="1" y="13" width="1" height="1" fill="#000"/><rect x="2" y="13" width="1" height="1" fill="#fff"/><rect x="3" y="13" width="1" height="1" fill="#000"/><rect x="6" y="13" width="1" height="1" fill="#000"/><rect x="7" y="13" width="1" height="1" fill="#fff"/><rect x="8" y="13" width="1" height="1" fill="#000"/><rect x="11" y="13" width="1" height="1" fill="#000"/><rect x="12" y="13" width="1" height="1" fill="#fff"/><rect x="13" y="13" width="1" height="1" fill="#000"/><rect x="0" y="14" width="1" height="1" fill="#000"/><rect x="1" y="14" width="1" height="1" fill="#fff"/><rect x="2" y="14" width="1" height="1" fill="#000"/><rect x="6" y="14" width="1" height="1" fill="#000"/><rect x="7" y="14" width="1" height="1" fill="#fff"/><rect x="8" y="14" width="1" height="1" fill="#000"/><rect x="12" y="14" width="1" height="1" fill="#000"/><rect x="13" y="14" width="1" height="1" fill="#fff"/><rect x="14" y="14" width="1" height="1" fill="#000"/><rect x="1" y="15" width="1" height="1" fill="#000"/><rect x="7" y="15" width="1" height="1" fill="#000"/><rect x="13" y="15" width="1" height="1" fill="#000"/></svg></div>
<span id="t21" class="tx " style="left:22.0px;top:1px;letter-spacing:0.236px;">Ortho</span>
</div>
<div class="row" style="top:136px;width:308px;">
<div class="ic"><svg style="left:0;top:0" width="16" height="17" viewBox="0 0 16 17" shape-rendering="crispEdges"><rect x="4" y="1" width="7" height="1" fill="#000"/><rect x="4" y="2" width="1" height="1" fill="#000"/><rect x="5" y="2" width="2" height="1" fill="#fff"/><rect x="7" y="2" width="1" height="1" fill="#000"/><rect x="8" y="2" width="2" height="1" fill="#fff"/><rect x="10" y="2" width="1" height="1" fill="#000"/><rect x="4" y="3" width="2" height="1" fill="#000"/><rect x="6" y="3" width="3" height="1" fill="#fff"/><rect x="9" y="3" width="2" height="1" fill="#000"/><rect x="4" y="4" width="2" height="1" fill="#000"/><rect x="6" y="4" width="3" height="1" fill="#fff"/><rect x="9" y="4" width="2" height="1" fill="#000"/><rect x="4" y="5" width="1" height="1" fill="#000"/><rect x="5" y="5" width="5" height="1" fill="#fff"/><rect x="10" y="5" width="1" height="1" fill="#000"/><rect x="4" y="6" width="3" height="1" fill="#000"/><rect x="7" y="6" width="1" height="1" fill="#fff"/><rect x="8" y="6" width="3" height="1" fill="#000"/><rect x="6" y="7" width="3" height="1" fill="#000"/><rect x="6" y="8" width="1" height="1" fill="#000"/><rect x="7" y="8" width="1" height="1" fill="#fff"/><rect x="8" y="8" width="1" height="1" fill="#000"/><rect x="6" y="9" width="1" height="1" fill="#000"/><rect x="7" y="9" width="1" height="1" fill="#fff"/><rect x="8" y="9" width="1" height="1" fill="#000"/><rect x="6" y="10" width="3" height="1" fill="#000"/><rect x="5" y="11" width="2" height="1" fill="#000"/><rect x="7" y="11" width="1" height="1" fill="#fff"/><rect x="8" y="11" width="2" height="1" fill="#000"/><rect x="-1" y="12" width="7" height="1" fill="#000"/><rect x="6" y="12" width="3" height="1" fill="#fff"/><rect x="9" y="12" width="8" height="1" fill="#000"/><rect x="-1" y="13" width="1" height="1" fill="#000"/><rect x="0" y="13" width="7" height="1" fill="#fff"/><rect x="7" y="13" width="1" height="1" fill="#8a8a8a"/><rect x="8" y="13" width="8" height="1" fill="#fff"/><rect x="16" y="13" width="1" height="1" fill="#000"/><rect x="-1" y="14" width="7" height="1" fill="#000"/><rect x="6" y="14" width="3" height="1" fill="#fff"/><rect x="9" y="14" width="8" height="1" fill="#000"/><rect x="5" y="15" width="5" height="1" fill="#000"/></svg></div>
<span id="t22" class="tx " style="left:22.0px;top:1px;letter-spacing:0.073px;">Projection</span>
</div>
<div class="row" style="top:153px;width:308px;">
<div class="ic"><svg style="left:0;top:0" width="16" height="17" viewBox="0 0 16 17" shape-rendering="crispEdges"><rect x="4" y="1" width="7" height="1" fill="#000"/><rect x="3" y="2" width="1" height="1" fill="#000"/><rect x="4" y="2" width="2" height="1" fill="#fff"/><rect x="6" y="2" width="1" height="1" fill="#f00"/><rect x="7" y="2" width="1" height="1" fill="#000"/><rect x="8" y="2" width="1" height="1" fill="#f00"/><rect x="9" y="2" width="2" height="1" fill="#fff"/><rect x="11" y="2" width="1" height="1" fill="#000"/><rect x="2" y="3" width="1" height="1" fill="#000"/><rect x="3" y="3" width="1" height="1" fill="#fff"/><rect x="6" y="3" width="3" height="1" fill="#f00"/><rect x="11" y="3" width="1" height="1" fill="#fff"/><rect x="12" y="3" width="1" height="1" fill="#000"/><rect x="1" y="4" width="1" height="1" fill="#000"/><rect x="2" y="4" width="1" height="1" fill="#fff"/><rect x="7" y="4" width="1" height="1" fill="#fff"/><rect x="12" y="4" width="1" height="1" fill="#fff"/><rect x="13" y="4" width="1" height="1" fill="#000"/><rect x="0" y="5" width="1" height="1" fill="#000"/><rect x="1" y="5" width="1" height="1" fill="#fff"/><rect x="7" y="5" width="1" height="1" fill="#333"/><rect x="13" y="5" width="1" height="1" fill="#fff"/><rect x="14" y="5" width="1" height="1" fill="#000"/><rect x="0" y="6" width="1" height="1" fill="#000"/><rect x="1" y="6" width="1" height="1" fill="#fff"/><rect x="6" y="6" width="1" height="1" fill="#333"/><rect x="7" y="6" width="1" height="1" fill="#fff"/><rect x="8" y="6" width="1" height="1" fill="#333"/><rect x="13" y="6" width="1" height="1" fill="#fff"/><rect x="14" y="6" width="1" height="1" fill="#000"/><rect x="0" y="7" width="1" height="1" fill="#000"/><rect x="1" y="7" width="2" height="1" fill="#f00"/><rect x="5" y="7" width="1" height="1" fill="#333"/><rect x="9" y="7" width="1" height="1" fill="#333"/><rect x="12" y="7" width="2" height="1" fill="#f00"/><rect x="14" y="7" width="1" height="1" fill="#000"/><rect x="0" y="8" width="2" height="1" fill="#000"/><rect x="2" y="8" width="1" height="1" fill="#f00"/><rect x="3" y="8" width="1" height="1" fill="#fff"/><rect x="4" y="8" width="1" height="1" fill="#333"/><rect x="5" y="8" width="1" height="1" fill="#fff"/><rect x="7" y="8" width="1" height="1" fill="#fff"/><rect x="9" y="8" width="1" height="1" fill="#fff"/><rect x="10" y="8" width="1" height="1" fill="#333"/><rect x="11" y="8" width="1" height="1" fill="#fff"/><rect x="12" y="8" width="1" height="1" fill="#f00"/><rect x="13" y="8" width="2" height="1" fill="#000"/><rect x="0" y="9" width="1" height="1" fill="#000"/><rect x="1" y="9" width="2" height="1" fill="#f00"/><rect x="5" y="9" width="1" height="1" fill="#333"/><rect x="9" y="9" width="1" height="1" fill="#333"/><rect x="12" y="9" width="2" height="1" fill="#f00"/><rect x="14" y="9" width="1" height="1" fill="#000"/><rect x="0" y="10" width="1" height="1" fill="#000"/><rect x="1" y="10" width="1" height="1" fill="#fff"/><rect x="6" y="10" width="1" height="1" fill="#333"/><rect x="7" y="10" width="1" height="1" fill="#fff"/><rect x="8" y="10" width="1" height="1" fill="#333"/><rect x="13" y="10" width="1" height="1" fill="#fff"/><rect x="14" y="10" width="1" height="1" fill="#000"/><rect x="0" y="11" width="1" height="1" fill="#000"/><rect x="1" y="11" width="1" height="1" fill="#fff"/><rect x="7" y="11" width="1" height="1" fill="#333"/><rect x="13" y="11" width="1" height="1" fill="#fff"/><rect x="14" y="11" width="1" height="1" fill="#000"/><rect x="1" y="12" width="1" height="1" fill="#000"/><rect x="2" y="12" width="1" height="1" fill="#fff"/><rect x="7" y="12" width="1" height="1" fill="#fff"/><rect x="12" y="12" width="1" height="1" fill="#fff"/><rect x="13" y="12" width="1" height="1" fill="#000"/><rect x="2" y="13" width="1" height="1" fill="#000"/><rect x="3" y="13" width="1" height="1" fill="#fff"/><rect x="6" y="13" width="3" height="1" fill="#f00"/><rect x="11" y="13" width="1" height="1" fill="#fff"/><rect x="12" y="13" width="1" height="1" fill="#000"/><rect x="3" y="14" width="1" height="1" fill="#000"/><rect x="4" y="14" width="2" height="1" fill="#fff"/><rect x="6" y="14" width="1" height="1" fill="#f00"/><rect x="7" y="14" width="1" height="1" fill="#000"/><rect x="8" y="14" width="1" height="1" fill="#f00"/><rect x="9" y="14" width="2" height="1" fill="#fff"/><rect x="11" y="14" width="1" height="1" fill="#000"/><rect x="4" y="15" width="7" height="1" fill="#000"/></svg></div>
<span id="t23" class="tx " style="left:22.0px;top:1px;letter-spacing:0.019px;">Quadrant Point</span>
</div>
<div class="row" style="top:170px;width:308px;">
<div class="ic"><svg style="left:0;top:0" width="16" height="17" viewBox="0 0 16 17" shape-rendering="crispEdges"><rect x="5" y="1" width="7" height="1" fill="#000"/><rect x="4" y="2" width="2" height="1" fill="#000"/><rect x="6" y="2" width="5" height="1" fill="#f00"/><rect x="11" y="2" width="2" height="1" fill="#000"/><rect x="3" y="3" width="2" height="1" fill="#000"/><rect x="5" y="3" width="7" height="1" fill="#f00"/><rect x="12" y="3" width="2" height="1" fill="#000"/><rect x="2" y="4" width="2" height="1" fill="#000"/><rect x="4" y="4" width="4" height="1" fill="#f00"/><rect x="8" y="4" width="1" height="1" fill="#000"/><rect x="9" y="4" width="4" height="1" fill="#f00"/><rect x="13" y="4" width="2" height="1" fill="#000"/><rect x="2" y="5" width="1" height="1" fill="#000"/><rect x="3" y="5" width="3" height="1" fill="#f00"/><rect x="6" y="5" width="2" height="1" fill="#000"/><rect x="8" y="5" width="1" height="1" fill="#8a8a8a"/><rect x="9" y="5" width="2" height="1" fill="#000"/><rect x="11" y="5" width="3" height="1" fill="#f00"/><rect x="14" y="5" width="1" height="1" fill="#000"/><rect x="2" y="6" width="1" height="1" fill="#000"/><rect x="3" y="6" width="3" height="1" fill="#f00"/><rect x="6" y="6" width="1" height="1" fill="#000"/><rect x="7" y="6" width="3" height="1" fill="#8a8a8a"/><rect x="10" y="6" width="1" height="1" fill="#000"/><rect x="11" y="6" width="3" height="1" fill="#f00"/><rect x="14" y="6" width="1" height="1" fill="#000"/><rect x="2" y="7" width="1" height="1" fill="#000"/><rect x="3" y="7" width="3" height="1" fill="#f00"/><rect x="6" y="7" width="1" height="1" fill="#000"/><rect x="7" y="7" width="3" height="1" fill="#8a8a8a"/><rect x="10" y="7" width="1" height="1" fill="#000"/><rect x="11" y="7" width="3" height="1" fill="#f00"/><rect x="14" y="7" width="1" height="1" fill="#000"/><rect x="2" y="8" width="1" height="1" fill="#000"/><rect x="3" y="8" width="3" height="1" fill="#f00"/><rect x="6" y="8" width="5" height="1" fill="#000"/><rect x="11" y="8" width="3" height="1" fill="#f00"/><rect x="14" y="8" width="1" height="1" fill="#000"/><rect x="2" y="9" width="1" height="1" fill="#000"/><rect x="3" y="9" width="3" height="1" fill="#f00"/><rect x="6" y="9" width="1" height="1" fill="#000"/><rect x="7" y="9" width="3" height="1" fill="#f00"/><rect x="10" y="9" width="1" height="1" fill="#000"/><rect x="11" y="9" width="3" height="1" fill="#f00"/><rect x="14" y="9" width="1" height="1" fill="#000"/><rect x="2" y="10" width="1" height="1" fill="#000"/><rect x="3" y="10" width="3" height="1" fill="#fff"/><rect x="6" y="10" width="1" height="1" fill="#000"/><rect x="7" y="10" width="1" height="1" fill="#f00"/><rect x="8" y="10" width="1" height="1" fill="#8a8a8a"/><rect x="9" y="10" width="1" height="1" fill="#f00"/><rect x="10" y="10" width="1" height="1" fill="#000"/><rect x="11" y="10" width="3" height="1" fill="#fff"/><rect x="14" y="10" width="1" height="1" fill="#000"/><rect x="2" y="11" width="5" height="1" fill="#000"/><rect x="7" y="11" width="3" height="1" fill="#f00"/><rect x="10" y="11" width="5" height="1" fill="#000"/><rect x="5" y="12" width="1" height="1" fill="#000"/><rect x="6" y="12" width="1" height="1" fill="#fff"/><rect x="7" y="12" width="3" height="1" fill="#000"/><rect x="10" y="12" width="1" height="1" fill="#fff"/><rect x="11" y="12" width="1" height="1" fill="#000"/><rect x="4" y="13" width="1" height="1" fill="#000"/><rect x="5" y="13" width="1" height="1" fill="#fff"/><rect x="6" y="13" width="1" height="1" fill="#000"/><rect x="10" y="13" width="1" height="1" fill="#000"/><rect x="11" y="13" width="1" height="1" fill="#fff"/><rect x="12" y="13" width="1" height="1" fill="#000"/><rect x="3" y="14" width="1" height="1" fill="#000"/><rect x="4" y="14" width="1" height="1" fill="#fff"/><rect x="5" y="14" width="1" height="1" fill="#000"/><rect x="11" y="14" width="1" height="1" fill="#000"/><rect x="12" y="14" width="1" height="1" fill="#fff"/><rect x="13" y="14" width="1" height="1" fill="#000"/><rect x="3" y="15" width="3" height="1" fill="#000"/><rect x="11" y="15" width="3" height="1" fill="#000"/></svg></div>
<span id="t24" class="tx " style="left:22.0px;top:1px;letter-spacing:0.024px;">Show Magnetic Point</span>
</div>
<div class="row" style="top:187px;width:308px;">
<div class="ic"><svg style="left:0;top:0" width="16" height="17" viewBox="0 0 16 17" shape-rendering="crispEdges"><rect x="7" y="1" width="1" height="1" fill="#1c1c1c"/><rect x="3" y="2" width="4" height="1" fill="#1c1c1c"/><rect x="2" y="3" width="1" height="1" fill="#1c1c1c"/><rect x="2" y="4" width="1" height="1" fill="#1c1c1c"/><rect x="5" y="4" width="1" height="1" fill="#1c1c1c"/><rect x="4" y="5" width="1" height="1" fill="#1c1c1c"/><rect x="7" y="5" width="1" height="1" fill="#1c1c1c"/><rect x="3" y="6" width="1" height="1" fill="#1c1c1c"/><rect x="5" y="6" width="1" height="1" fill="#6e6e6e"/><rect x="8" y="6" width="1" height="1" fill="#1c1c1c"/><rect x="2" y="7" width="1" height="1" fill="#1c1c1c"/><rect x="4" y="7" width="1" height="1" fill="#6e6e6e"/><rect x="9" y="7" width="1" height="1" fill="#1c1c1c"/><rect x="1" y="8" width="1" height="1" fill="#1c1c1c"/><rect x="3" y="8" width="1" height="1" fill="#6e6e6e"/><rect x="10" y="8" width="1" height="1" fill="#1c1c1c"/><rect x="1" y="9" width="1" height="1" fill="#1c1c1c"/><rect x="11" y="9" width="1" height="1" fill="#1c1c1c"/><rect x="2" y="10" width="1" height="1" fill="#1c1c1c"/><rect x="3" y="11" width="1" height="1" fill="#1c1c1c"/><rect x="4" y="12" width="1" height="1" fill="#1c1c1c"/><rect x="10" y="12" width="1" height="1" fill="#6e6e6e"/><rect x="5" y="13" width="1" height="1" fill="#1c1c1c"/><rect x="9" y="13" width="1" height="1" fill="#6e6e6e"/><rect x="6" y="14" width="1" height="1" fill="#1c1c1c"/></svg></div>
<span id="t25" class="tx " style="left:20.0px;top:1px;letter-spacing:-0.175px;">Snap Options...</span>
</div>
<div class="row" style="top:204px;width:308px;">
<div class="ic"><svg style="left:0;top:0" width="16" height="17" viewBox="0 0 16 17" shape-rendering="crispEdges"><rect x="8" y="0" width="1" height="1" fill="#000"/><rect x="7" y="1" width="1" height="1" fill="#000"/><rect x="8" y="1" width="1" height="1" fill="#fff"/><rect x="9" y="1" width="1" height="1" fill="#000"/><rect x="6" y="2" width="1" height="1" fill="#000"/><rect x="7" y="2" width="1" height="1" fill="#fff"/><rect x="8" y="2" width="5" height="1" fill="#000"/><rect x="2" y="3" width="7" height="1" fill="#000"/><rect x="9" y="3" width="4" height="1" fill="#fff"/><rect x="13" y="3" width="3" height="1" fill="#000"/><rect x="2" y="4" width="1" height="1" fill="#000"/><rect x="3" y="4" width="3" height="1" fill="#f00"/><rect x="6" y="4" width="1" height="1" fill="#000"/><rect x="7" y="4" width="2" height="1" fill="#fff"/><rect x="9" y="4" width="4" height="1" fill="#000"/><rect x="13" y="4" width="3" height="1" fill="#fff"/><rect x="16" y="4" width="1" height="1" fill="#000"/><rect x="2" y="5" width="1" height="1" fill="#000"/><rect x="3" y="5" width="1" height="1" fill="#f00"/><rect x="4" y="5" width="1" height="1" fill="#8a8a8a"/><rect x="5" y="5" width="1" height="1" fill="#f00"/><rect x="6" y="5" width="3" height="1" fill="#000"/><rect x="13" y="5" width="3" height="1" fill="#000"/><rect x="2" y="6" width="1" height="1" fill="#000"/><rect x="3" y="6" width="3" height="1" fill="#f00"/><rect x="6" y="6" width="1" height="1" fill="#000"/><rect x="1" y="7" width="6" height="1" fill="#000"/><rect x="0" y="8" width="1" height="1" fill="#000"/><rect x="1" y="8" width="1" height="1" fill="#fff"/><rect x="2" y="8" width="1" height="1" fill="#000"/><rect x="3" y="8" width="1" height="1" fill="#fff"/><rect x="4" y="8" width="1" height="1" fill="#000"/><rect x="-1" y="9" width="1" height="1" fill="#000"/><rect x="0" y="9" width="1" height="1" fill="#fff"/><rect x="1" y="9" width="2" height="1" fill="#000"/><rect x="3" y="9" width="1" height="1" fill="#fff"/><rect x="4" y="9" width="1" height="1" fill="#000"/><rect x="0" y="10" width="2" height="1" fill="#000"/><rect x="2" y="10" width="1" height="1" fill="#fff"/><rect x="3" y="10" width="1" height="1" fill="#000"/><rect x="1" y="11" width="1" height="1" fill="#000"/><rect x="2" y="11" width="1" height="1" fill="#fff"/><rect x="3" y="11" width="1" height="1" fill="#000"/><rect x="1" y="12" width="1" height="1" fill="#000"/><rect x="2" y="12" width="1" height="1" fill="#fff"/><rect x="3" y="12" width="1" height="1" fill="#000"/><rect x="1" y="13" width="1" height="1" fill="#000"/><rect x="2" y="13" width="1" height="1" fill="#fff"/><rect x="3" y="13" width="1" height="1" fill="#000"/><rect x="2" y="14" width="1" height="1" fill="#000"/><rect x="3" y="14" width="1" height="1" fill="#fff"/><rect x="4" y="14" width="1" height="1" fill="#000"/><rect x="2" y="15" width="1" height="1" fill="#000"/><rect x="3" y="15" width="1" height="1" fill="#fff"/><rect x="4" y="15" width="1" height="1" fill="#000"/><rect x="3" y="16" width="1" height="1" fill="#000"/></svg></div>
<span id="t26" class="tx " style="left:22.0px;top:1px;letter-spacing:0.040px;">Tangent</span>
</div>
<div class="row" style="top:221px;width:308px;">
<div class="ic"><svg style="left:0;top:0" width="16" height="17" viewBox="0 0 16 17" shape-rendering="crispEdges"><rect x="7" y="1" width="3" height="1" fill="#000"/><rect x="7" y="2" width="1" height="1" fill="#000"/><rect x="8" y="2" width="1" height="1" fill="#fff"/><rect x="9" y="2" width="1" height="1" fill="#000"/><rect x="7" y="3" width="1" height="1" fill="#000"/><rect x="8" y="3" width="1" height="1" fill="#fff"/><rect x="10" y="3" width="1" height="1" fill="#000"/><rect x="0" y="4" width="3" height="1" fill="#000"/><rect x="6" y="4" width="1" height="1" fill="#000"/><rect x="7" y="4" width="2" height="1" fill="#fff"/><rect x="9" y="4" width="1" height="1" fill="#555"/><rect x="10" y="4" width="1" height="1" fill="#000"/><rect x="0" y="5" width="1" height="1" fill="#000"/><rect x="1" y="5" width="1" height="1" fill="#fff"/><rect x="2" y="5" width="1" height="1" fill="#000"/><rect x="6" y="5" width="1" height="1" fill="#000"/><rect x="7" y="5" width="1" height="1" fill="#fff"/><rect x="8" y="5" width="1" height="1" fill="#d2d2d2"/><rect x="9" y="5" width="1" height="1" fill="#555"/><rect x="11" y="5" width="1" height="1" fill="#000"/><rect x="0" y="6" width="3" height="1" fill="#000"/><rect x="4" y="6" width="2" height="1" fill="#000"/><rect x="6" y="6" width="2" height="1" fill="#fff"/><rect x="8" y="6" width="1" height="1" fill="#d2d2d2"/><rect x="9" y="6" width="1" height="1" fill="#555"/><rect x="10" y="6" width="1" height="1" fill="#fff"/><rect x="11" y="6" width="1" height="1" fill="#000"/><rect x="3" y="7" width="1" height="1" fill="#000"/><rect x="4" y="7" width="1" height="1" fill="#fff"/><rect x="5" y="7" width="1" height="1" fill="#000"/><rect x="6" y="7" width="2" height="1" fill="#fff"/><rect x="8" y="7" width="1" height="1" fill="#d2d2d2"/><rect x="9" y="7" width="1" height="1" fill="#555"/><rect x="10" y="7" width="2" height="1" fill="#fff"/><rect x="12" y="7" width="1" height="1" fill="#000"/><rect x="3" y="8" width="2" height="1" fill="#000"/><rect x="5" y="8" width="3" height="1" fill="#fff"/><rect x="8" y="8" width="1" height="1" fill="#d2d2d2"/><rect x="9" y="8" width="1" height="1" fill="#6e6e6e"/><rect x="10" y="8" width="1" height="1" fill="#555"/><rect x="11" y="8" width="1" height="1" fill="#fff"/><rect x="13" y="8" width="1" height="1" fill="#000"/><rect x="4" y="9" width="1" height="1" fill="#000"/><rect x="5" y="9" width="5" height="1" fill="#c00000"/><rect x="10" y="9" width="2" height="1" fill="#555"/><rect x="12" y="9" width="1" height="1" fill="#fff"/><rect x="13" y="9" width="1" height="1" fill="#000"/><rect x="3" y="10" width="1" height="1" fill="#000"/><rect x="4" y="10" width="1" height="1" fill="#fff"/><rect x="5" y="10" width="1" height="1" fill="#c00000"/><rect x="6" y="10" width="3" height="1" fill="#f00"/><rect x="9" y="10" width="1" height="1" fill="#c00000"/><rect x="10" y="10" width="1" height="1" fill="#6e6e6e"/><rect x="11" y="10" width="1" height="1" fill="#555"/><rect x="12" y="10" width="2" height="1" fill="#fff"/><rect x="14" y="10" width="1" height="1" fill="#000"/><rect x="3" y="11" width="1" height="1" fill="#000"/><rect x="4" y="11" width="1" height="1" fill="#fff"/><rect x="5" y="11" width="1" height="1" fill="#c00000"/><rect x="6" y="11" width="1" height="1" fill="#f00"/><rect x="7" y="11" width="1" height="1" fill="#8a8a8a"/><rect x="8" y="11" width="1" height="1" fill="#f00"/><rect x="9" y="11" width="1" height="1" fill="#c00000"/><rect x="10" y="11" width="1" height="1" fill="#6e6e6e"/><rect x="11" y="11" width="1" height="1" fill="#555"/><rect x="12" y="11" width="1" height="1" fill="#fff"/><rect x="13" y="11" width="1" height="1" fill="#000"/><rect x="2" y="12" width="1" height="1" fill="#000"/><rect x="3" y="12" width="2" height="1" fill="#fff"/><rect x="5" y="12" width="1" height="1" fill="#c00000"/><rect x="6" y="12" width="3" height="1" fill="#f00"/><rect x="9" y="12" width="1" height="1" fill="#c00000"/><rect x="10" y="12" width="1" height="1" fill="#555"/><rect x="11" y="12" width="1" height="1" fill="#fff"/><rect x="12" y="12" width="1" height="1" fill="#000"/><rect x="1" y="13" width="1" height="1" fill="#000"/><rect x="2" y="13" width="2" height="1" fill="#fff"/><rect x="4" y="13" width="1" height="1" fill="#d2d2d2"/><rect x="5" y="13" width="5" height="1" fill="#c00000"/><rect x="10" y="13" width="1" height="1" fill="#fff"/><rect x="11" y="13" width="1" height="1" fill="#000"/><rect x="0" y="14" width="1" height="1" fill="#000"/><rect x="1" y="14" width="9" height="1" fill="#d2d2d2"/><rect x="10" y="14" width="2" height="1" fill="#000"/><rect x="0" y="15" width="11" height="1" fill="#000"/></svg></div>
<span id="t27" class="tx " style="left:22.0px;top:1px;letter-spacing:-0.190px;">Use WorkPlane Intersections</span>
</div>
<div class="row" style="top:238px;width:308px;">
<div class="ic"><svg style="left:0;top:0" width="16" height="17" viewBox="0 0 16 17" shape-rendering="crispEdges"><rect x="8" y="4" width="1" height="1" fill="#000"/><rect x="0" y="5" width="5" height="1" fill="#000"/><rect x="7" y="5" width="1" height="1" fill="#000"/><rect x="8" y="5" width="1" height="1" fill="#fff"/><rect x="9" y="5" width="1" height="1" fill="#000"/><rect x="11" y="5" width="5" height="1" fill="#000"/><rect x="0" y="6" width="1" height="1" fill="#000"/><rect x="1" y="6" width="3" height="1" fill="#fff"/><rect x="4" y="6" width="5" height="1" fill="#000"/><rect x="9" y="6" width="1" height="1" fill="#fff"/><rect x="10" y="6" width="2" height="1" fill="#000"/><rect x="12" y="6" width="3" height="1" fill="#f00"/><rect x="15" y="6" width="1" height="1" fill="#000"/><rect x="0" y="7" width="1" height="1" fill="#000"/><rect x="1" y="7" width="1" height="1" fill="#fff"/><rect x="2" y="7" width="1" height="1" fill="#d2d2d2"/><rect x="3" y="7" width="1" height="1" fill="#fff"/><rect x="4" y="7" width="1" height="1" fill="#000"/><rect x="5" y="7" width="6" height="1" fill="#fff"/><rect x="11" y="7" width="1" height="1" fill="#000"/><rect x="12" y="7" width="1" height="1" fill="#f00"/><rect x="13" y="7" width="1" height="1" fill="#b4b4b4"/><rect x="14" y="7" width="1" height="1" fill="#f00"/><rect x="15" y="7" width="1" height="1" fill="#000"/><rect x="0" y="8" width="1" height="1" fill="#000"/><rect x="1" y="8" width="3" height="1" fill="#fff"/><rect x="4" y="8" width="5" height="1" fill="#000"/><rect x="9" y="8" width="1" height="1" fill="#fff"/><rect x="10" y="8" width="2" height="1" fill="#000"/><rect x="12" y="8" width="3" height="1" fill="#f00"/><rect x="15" y="8" width="1" height="1" fill="#000"/><rect x="0" y="9" width="5" height="1" fill="#000"/><rect x="7" y="9" width="1" height="1" fill="#000"/><rect x="8" y="9" width="1" height="1" fill="#fff"/><rect x="9" y="9" width="1" height="1" fill="#000"/><rect x="11" y="9" width="5" height="1" fill="#000"/><rect x="8" y="10" width="1" height="1" fill="#000"/></svg></div>
<span id="t28" class="tx " style="left:22.0px;top:1px;letter-spacing:-0.422px;">Vertex</span>
</div>
<div class="row" style="top:255px;width:308px;">
<div class="ic"><svg style="left:0;top:0" width="16" height="17" viewBox="0 0 16 17" shape-rendering="crispEdges"><rect x="2" y="1" width="3" height="1" fill="#4b96ff"/><rect x="12" y="1" width="3" height="1" fill="#4b96ff"/><rect x="2" y="2" width="1" height="1" fill="#4b96ff"/><rect x="3" y="2" width="1" height="1" fill="#555"/><rect x="4" y="2" width="1" height="1" fill="#4b96ff"/><rect x="12" y="2" width="1" height="1" fill="#4b96ff"/><rect x="13" y="2" width="1" height="1" fill="#555"/><rect x="14" y="2" width="1" height="1" fill="#4b96ff"/><rect x="2" y="3" width="3" height="1" fill="#4b96ff"/><rect x="7" y="3" width="3" height="1" fill="#000"/><rect x="12" y="3" width="3" height="1" fill="#4b96ff"/><rect x="6" y="4" width="1" height="1" fill="#000"/><rect x="7" y="4" width="3" height="1" fill="#fff"/><rect x="10" y="4" width="1" height="1" fill="#000"/><rect x="5" y="5" width="1" height="1" fill="#000"/><rect x="6" y="5" width="1" height="1" fill="#fff"/><rect x="7" y="5" width="3" height="1" fill="#000"/><rect x="10" y="5" width="1" height="1" fill="#fff"/><rect x="11" y="5" width="1" height="1" fill="#000"/><rect x="4" y="6" width="1" height="1" fill="#000"/><rect x="5" y="6" width="1" height="1" fill="#fff"/><rect x="6" y="6" width="1" height="1" fill="#000"/><rect x="10" y="6" width="1" height="1" fill="#000"/><rect x="11" y="6" width="1" height="1" fill="#fff"/><rect x="12" y="6" width="1" height="1" fill="#000"/><rect x="3" y="7" width="1" height="1" fill="#000"/><rect x="4" y="7" width="1" height="1" fill="#fff"/><rect x="5" y="7" width="1" height="1" fill="#000"/><rect x="11" y="7" width="1" height="1" fill="#000"/><rect x="12" y="7" width="1" height="1" fill="#fff"/><rect x="13" y="7" width="1" height="1" fill="#000"/><rect x="2" y="8" width="1" height="1" fill="#000"/><rect x="3" y="8" width="1" height="1" fill="#fff"/><rect x="4" y="8" width="1" height="1" fill="#000"/><rect x="12" y="8" width="1" height="1" fill="#000"/><rect x="13" y="8" width="1" height="1" fill="#fff"/><rect x="14" y="8" width="1" height="1" fill="#000"/><rect x="2" y="9" width="1" height="1" fill="#000"/><rect x="3" y="9" width="1" height="1" fill="#fff"/><rect x="4" y="9" width="1" height="1" fill="#000"/><rect x="12" y="9" width="1" height="1" fill="#000"/><rect x="13" y="9" width="1" height="1" fill="#fff"/><rect x="14" y="9" width="1" height="1" fill="#000"/><rect x="1" y="10" width="1" height="1" fill="#000"/><rect x="2" y="10" width="1" height="1" fill="#fff"/><rect x="3" y="10" width="1" height="1" fill="#000"/><rect x="13" y="10" width="1" height="1" fill="#000"/><rect x="14" y="10" width="1" height="1" fill="#fff"/><rect x="15" y="10" width="1" height="1" fill="#000"/><rect x="1" y="11" width="1" height="1" fill="#000"/><rect x="2" y="11" width="1" height="1" fill="#fff"/><rect x="3" y="11" width="1" height="1" fill="#000"/><rect x="13" y="11" width="1" height="1" fill="#000"/><rect x="14" y="11" width="1" height="1" fill="#fff"/><rect x="15" y="11" width="1" height="1" fill="#000"/><rect x="1" y="12" width="1" height="1" fill="#000"/><rect x="2" y="12" width="1" height="1" fill="#fff"/><rect x="3" y="12" width="1" height="1" fill="#000"/><rect x="13" y="12" width="1" height="1" fill="#000"/><rect x="14" y="12" width="1" height="1" fill="#fff"/><rect x="15" y="12" width="1" height="1" fill="#000"/><rect x="0" y="13" width="3" height="1" fill="#4b96ff"/><rect x="13" y="13" width="3" height="1" fill="#4b96ff"/><rect x="0" y="14" width="1" height="1" fill="#4b96ff"/><rect x="1" y="14" width="1" height="1" fill="#555"/><rect x="2" y="14" width="1" height="1" fill="#4b96ff"/><rect x="13" y="14" width="1" height="1" fill="#4b96ff"/><rect x="14" y="14" width="1" height="1" fill="#555"/><rect x="15" y="14" width="1" height="1" fill="#4b96ff"/><rect x="0" y="15" width="3" height="1" fill="#4b96ff"/><rect x="13" y="15" width="3" height="1" fill="#4b96ff"/></svg></div>
<span id="t29" class="tx " style="left:22.0px;top:1px;letter-spacing:-0.036px;">By Control Points</span>
</div>
<div class="row" style="top:272px;width:308px;">
<div class="ic"><svg style="left:0;top:0" width="16" height="17" viewBox="0 0 16 17" shape-rendering="crispEdges"><rect x="11" y="2" width="3" height="1" fill="#4b96ff"/><rect x="7" y="3" width="4" height="1" fill="#000"/><rect x="11" y="3" width="1" height="1" fill="#4b96ff"/><rect x="12" y="3" width="1" height="1" fill="#555"/><rect x="13" y="3" width="1" height="1" fill="#4b96ff"/><rect x="6" y="4" width="1" height="1" fill="#000"/><rect x="7" y="4" width="4" height="1" fill="#fff"/><rect x="11" y="4" width="3" height="1" fill="#4b96ff"/><rect x="3" y="5" width="3" height="1" fill="#4b96ff"/><rect x="6" y="5" width="1" height="1" fill="#fff"/><rect x="7" y="5" width="4" height="1" fill="#000"/><rect x="3" y="6" width="1" height="1" fill="#4b96ff"/><rect x="4" y="6" width="1" height="1" fill="#555"/><rect x="5" y="6" width="1" height="1" fill="#4b96ff"/><rect x="6" y="6" width="1" height="1" fill="#fff"/><rect x="7" y="6" width="1" height="1" fill="#000"/><rect x="3" y="7" width="3" height="1" fill="#4b96ff"/><rect x="6" y="7" width="1" height="1" fill="#000"/><rect x="4" y="8" width="1" height="1" fill="#000"/><rect x="5" y="8" width="1" height="1" fill="#fff"/><rect x="6" y="8" width="1" height="1" fill="#000"/><rect x="5" y="9" width="1" height="1" fill="#000"/><rect x="6" y="9" width="1" height="1" fill="#fff"/><rect x="7" y="9" width="1" height="1" fill="#000"/><rect x="8" y="9" width="3" height="1" fill="#4b96ff"/><rect x="6" y="10" width="1" height="1" fill="#000"/><rect x="7" y="10" width="1" height="1" fill="#fff"/><rect x="8" y="10" width="1" height="1" fill="#4b96ff"/><rect x="9" y="10" width="1" height="1" fill="#555"/><rect x="10" y="10" width="1" height="1" fill="#4b96ff"/><rect x="7" y="11" width="1" height="1" fill="#000"/><rect x="8" y="11" width="3" height="1" fill="#4b96ff"/><rect x="6" y="12" width="2" height="1" fill="#000"/><rect x="8" y="12" width="1" height="1" fill="#fff"/><rect x="9" y="12" width="1" height="1" fill="#000"/><rect x="1" y="13" width="3" height="1" fill="#4b96ff"/><rect x="4" y="13" width="2" height="1" fill="#000"/><rect x="6" y="13" width="2" height="1" fill="#fff"/><rect x="8" y="13" width="1" height="1" fill="#000"/><rect x="1" y="14" width="1" height="1" fill="#4b96ff"/><rect x="2" y="14" width="1" height="1" fill="#555"/><rect x="3" y="14" width="1" height="1" fill="#4b96ff"/><rect x="4" y="14" width="2" height="1" fill="#fff"/><rect x="6" y="14" width="2" height="1" fill="#000"/><rect x="1" y="15" width="3" height="1" fill="#4b96ff"/><rect x="4" y="15" width="2" height="1" fill="#000"/></svg></div>
<span id="t30" class="tx " style="left:22.0px;top:1px;letter-spacing:-0.151px;">By Fit Points</span>
</div>
<div class="row" style="top:289px;width:308px;">
<div class="ic"><svg style="left:0;top:0" width="16" height="17" viewBox="0 0 16 17" shape-rendering="crispEdges"><rect x="7" y="0" width="1" height="1" fill="#000"/><rect x="6" y="1" width="1" height="1" fill="#000"/><rect x="7" y="1" width="1" height="1" fill="#fff"/><rect x="8" y="1" width="1" height="1" fill="#000"/><rect x="4" y="2" width="2" height="1" fill="#000"/><rect x="6" y="2" width="3" height="1" fill="#fff"/><rect x="9" y="2" width="1" height="1" fill="#000"/><rect x="3" y="3" width="1" height="1" fill="#000"/><rect x="4" y="3" width="3" height="1" fill="#d2d2d2"/><rect x="7" y="3" width="3" height="1" fill="#fff"/><rect x="10" y="3" width="1" height="1" fill="#000"/><rect x="2" y="4" width="1" height="1" fill="#000"/><rect x="3" y="4" width="2" height="1" fill="#fff"/><rect x="5" y="4" width="3" height="1" fill="#8a8a8a"/><rect x="8" y="4" width="3" height="1" fill="#fff"/><rect x="11" y="4" width="1" height="1" fill="#000"/><rect x="2" y="5" width="1" height="1" fill="#000"/><rect x="3" y="5" width="3" height="1" fill="#fff"/><rect x="6" y="5" width="3" height="1" fill="#d2d2d2"/><rect x="9" y="5" width="3" height="1" fill="#fff"/><rect x="12" y="5" width="1" height="1" fill="#000"/><rect x="3" y="6" width="1" height="1" fill="#000"/><rect x="4" y="6" width="3" height="1" fill="#fff"/><rect x="7" y="6" width="3" height="1" fill="#8a8a8a"/><rect x="10" y="6" width="3" height="1" fill="#fff"/><rect x="13" y="6" width="1" height="1" fill="#000"/><rect x="4" y="7" width="1" height="1" fill="#000"/><rect x="5" y="7" width="3" height="1" fill="#fff"/><rect x="8" y="7" width="3" height="1" fill="#d2d2d2"/><rect x="11" y="7" width="3" height="1" fill="#fff"/><rect x="14" y="7" width="1" height="1" fill="#000"/><rect x="5" y="8" width="2" height="1" fill="#000"/><rect x="7" y="8" width="2" height="1" fill="#fff"/><rect x="9" y="8" width="3" height="1" fill="#8a8a8a"/><rect x="12" y="8" width="3" height="1" fill="#fff"/><rect x="15" y="8" width="1" height="1" fill="#000"/><rect x="5" y="9" width="1" height="1" fill="#000"/><rect x="6" y="9" width="3" height="1" fill="#fff"/><rect x="9" y="9" width="3" height="1" fill="#d2d2d2"/><rect x="12" y="9" width="2" height="1" fill="#fff"/><rect x="14" y="9" width="1" height="1" fill="#000"/><rect x="4" y="10" width="1" height="1" fill="#000"/><rect x="5" y="10" width="3" height="1" fill="#fff"/><rect x="8" y="10" width="3" height="1" fill="#8a8a8a"/><rect x="11" y="10" width="2" height="1" fill="#fff"/><rect x="13" y="10" width="1" height="1" fill="#000"/><rect x="2" y="11" width="2" height="1" fill="#000"/><rect x="4" y="11" width="3" height="1" fill="#fff"/><rect x="7" y="11" width="3" height="1" fill="#d2d2d2"/><rect x="10" y="11" width="2" height="1" fill="#fff"/><rect x="12" y="11" width="1" height="1" fill="#000"/><rect x="1" y="12" width="1" height="1" fill="#000"/><rect x="2" y="12" width="4" height="1" fill="#fff"/><rect x="6" y="12" width="3" height="1" fill="#8a8a8a"/><rect x="9" y="12" width="2" height="1" fill="#fff"/><rect x="11" y="12" width="1" height="1" fill="#000"/><rect x="0" y="13" width="1" height="1" fill="#000"/><rect x="1" y="13" width="4" height="1" fill="#fff"/><rect x="5" y="13" width="3" height="1" fill="#d2d2d2"/><rect x="8" y="13" width="2" height="1" fill="#fff"/><rect x="10" y="13" width="1" height="1" fill="#000"/><rect x="1" y="14" width="3" height="1" fill="#000"/><rect x="4" y="14" width="3" height="1" fill="#8a8a8a"/><rect x="7" y="14" width="2" height="1" fill="#fff"/><rect x="9" y="14" width="1" height="1" fill="#000"/><rect x="4" y="15" width="3" height="1" fill="#000"/><rect x="7" y="15" width="1" height="1" fill="#fff"/><rect x="8" y="15" width="1" height="1" fill="#000"/><rect x="7" y="16" width="1" height="1" fill="#000"/></svg></div>
<span id="t31" class="tx " style="left:22.0px;top:1px;letter-spacing:0.037px;">Multi Landing Stair</span>
</div>
<div class="row" style="top:306px;width:308px;">
<div class="ic"><svg style="left:0;top:0" width="16" height="17" viewBox="0 0 16 17" shape-rendering="crispEdges"><rect x="7" y="1" width="1" height="1" fill="#fff"/><rect x="4" y="2" width="1" height="1" fill="#0a8cff"/><rect x="5" y="2" width="1" height="1" fill="#fff"/><rect x="6" y="2" width="1" height="1" fill="#6e6e6e"/><rect x="7" y="2" width="1" height="1" fill="#fff"/><rect x="8" y="2" width="1" height="1" fill="#6e6e6e"/><rect x="4" y="3" width="1" height="1" fill="#6e6e6e"/><rect x="5" y="3" width="1" height="1" fill="#2a2aff"/><rect x="6" y="3" width="2" height="1" fill="#fff"/><rect x="8" y="3" width="1" height="1" fill="#000"/><rect x="9" y="3" width="1" height="1" fill="#fff"/><rect x="2" y="4" width="1" height="1" fill="#6e6e6e"/><rect x="3" y="4" width="3" height="1" fill="#fff"/><rect x="6" y="4" width="1" height="1" fill="#2a2aff"/><rect x="7" y="4" width="3" height="1" fill="#fff"/><rect x="10" y="4" width="1" height="1" fill="#6e6e6e"/><rect x="1" y="5" width="6" height="1" fill="#fff"/><rect x="7" y="5" width="1" height="1" fill="#2a2aff"/><rect x="8" y="5" width="2" height="1" fill="#fff"/><rect x="10" y="5" width="1" height="1" fill="#000"/><rect x="11" y="5" width="1" height="1" fill="#fff"/><rect x="12" y="5" width="1" height="1" fill="#6e6e6e"/><rect x="2" y="6" width="1" height="1" fill="#6e6e6e"/><rect x="3" y="6" width="1" height="1" fill="#000"/><rect x="4" y="6" width="4" height="1" fill="#fff"/><rect x="8" y="6" width="1" height="1" fill="#2a2aff"/><rect x="9" y="6" width="5" height="1" fill="#fff"/><rect x="3" y="7" width="6" height="1" fill="#fff"/><rect x="9" y="7" width="1" height="1" fill="#2a2aff"/><rect x="10" y="7" width="2" height="1" fill="#fff"/><rect x="12" y="7" width="1" height="1" fill="#000"/><rect x="13" y="7" width="1" height="1" fill="#fff"/><rect x="14" y="7" width="1" height="1" fill="#6e6e6e"/><rect x="5" y="8" width="1" height="1" fill="#000"/><rect x="6" y="8" width="4" height="1" fill="#fff"/><rect x="10" y="8" width="1" height="1" fill="#2a2aff"/><rect x="11" y="8" width="2" height="1" fill="#fff"/><rect x="13" y="8" width="1" height="1" fill="#000"/><rect x="14" y="8" width="2" height="1" fill="#fff"/><rect x="6" y="9" width="1" height="1" fill="#6e6e6e"/><rect x="7" y="9" width="1" height="1" fill="#000"/><rect x="8" y="9" width="1" height="1" fill="#fff"/><rect x="9" y="9" width="1" height="1" fill="#2a2aff"/><rect x="10" y="9" width="4" height="1" fill="#fff"/><rect x="14" y="9" width="1" height="1" fill="#6e6e6e"/><rect x="4" y="10" width="1" height="1" fill="#fff"/><rect x="5" y="10" width="1" height="1" fill="#6e6e6e"/><rect x="6" y="10" width="2" height="1" fill="#fff"/><rect x="8" y="10" width="1" height="1" fill="#2a2aff"/><rect x="9" y="10" width="2" height="1" fill="#fff"/><rect x="11" y="10" width="1" height="1" fill="#000"/><rect x="12" y="10" width="2" height="1" fill="#fff"/><rect x="3" y="11" width="1" height="1" fill="#6e6e6e"/><rect x="4" y="11" width="1" height="1" fill="#fff"/><rect x="5" y="11" width="1" height="1" fill="#000"/><rect x="6" y="11" width="1" height="1" fill="#fff"/><rect x="7" y="11" width="1" height="1" fill="#2a2aff"/><rect x="8" y="11" width="4" height="1" fill="#fff"/><rect x="12" y="11" width="1" height="1" fill="#6e6e6e"/><rect x="1" y="12" width="1" height="1" fill="#6e6e6e"/><rect x="2" y="12" width="1" height="1" fill="#fff"/><rect x="3" y="12" width="1" height="1" fill="#000"/><rect x="4" y="12" width="2" height="1" fill="#fff"/><rect x="6" y="12" width="1" height="1" fill="#2a2aff"/><rect x="7" y="12" width="2" height="1" fill="#fff"/><rect x="9" y="12" width="1" height="1" fill="#000"/><rect x="10" y="12" width="2" height="1" fill="#fff"/><rect x="0" y="13" width="2" height="1" fill="#fff"/><rect x="2" y="13" width="1" height="1" fill="#6e6e6e"/><rect x="3" y="13" width="2" height="1" fill="#fff"/><rect x="5" y="13" width="1" height="1" fill="#2a2aff"/><rect x="6" y="13" width="4" height="1" fill="#fff"/><rect x="10" y="13" width="1" height="1" fill="#6e6e6e"/><rect x="3" y="14" width="1" height="1" fill="#fff"/><rect x="4" y="14" width="1" height="1" fill="#2a2aff"/><rect x="5" y="14" width="5" height="1" fill="#fff"/><rect x="3" y="15" width="1" height="1" fill="#0a8cff"/><rect x="6" y="15" width="1" height="1" fill="#6e6e6e"/><rect x="7" y="15" width="1" height="1" fill="#fff"/><rect x="8" y="15" width="1" height="1" fill="#6e6e6e"/></svg></div>
<span id="t32" class="tx " style="left:22.0px;top:1px;letter-spacing:-0.012px;">Multi Landing Stair by Path</span>
</div>
<div class="row" style="top:323px;width:308px;">
<div class="ic"><svg style="left:0;top:0" width="16" height="17" viewBox="0 0 16 17" shape-rendering="crispEdges"><rect x="4" y="1" width="6" height="1" fill="#000"/><rect x="2" y="2" width="2" height="1" fill="#000"/><rect x="4" y="2" width="5" height="1" fill="#fff"/><rect x="9" y="2" width="1" height="1" fill="#000"/><rect x="1" y="3" width="1" height="1" fill="#000"/><rect x="2" y="3" width="6" height="1" fill="#fff"/><rect x="8" y="3" width="1" height="1" fill="#000"/><rect x="1" y="4" width="1" height="1" fill="#000"/><rect x="2" y="4" width="1" height="1" fill="#fff"/><rect x="3" y="4" width="4" height="1" fill="#d2d2d2"/><rect x="7" y="4" width="1" height="1" fill="#fff"/><rect x="8" y="4" width="1" height="1" fill="#000"/><rect x="1" y="5" width="1" height="1" fill="#000"/><rect x="2" y="5" width="6" height="1" fill="#fff"/><rect x="8" y="5" width="1" height="1" fill="#000"/><rect x="2" y="6" width="1" height="1" fill="#000"/><rect x="3" y="6" width="6" height="1" fill="#fff"/><rect x="9" y="6" width="1" height="1" fill="#000"/><rect x="3" y="7" width="1" height="1" fill="#000"/><rect x="4" y="7" width="1" height="1" fill="#fff"/><rect x="5" y="7" width="3" height="1" fill="#d2d2d2"/><rect x="8" y="7" width="2" height="1" fill="#fff"/><rect x="10" y="7" width="1" height="1" fill="#000"/><rect x="4" y="8" width="1" height="1" fill="#000"/><rect x="5" y="8" width="6" height="1" fill="#fff"/><rect x="11" y="8" width="1" height="1" fill="#000"/><rect x="5" y="9" width="1" height="1" fill="#000"/><rect x="6" y="9" width="1" height="1" fill="#fff"/><rect x="7" y="9" width="3" height="1" fill="#d2d2d2"/><rect x="10" y="9" width="2" height="1" fill="#fff"/><rect x="12" y="9" width="1" height="1" fill="#000"/><rect x="6" y="10" width="1" height="1" fill="#000"/><rect x="7" y="10" width="6" height="1" fill="#fff"/><rect x="13" y="10" width="1" height="1" fill="#000"/><rect x="7" y="11" width="1" height="1" fill="#000"/><rect x="8" y="11" width="1" height="1" fill="#fff"/><rect x="9" y="11" width="3" height="1" fill="#d2d2d2"/><rect x="12" y="11" width="2" height="1" fill="#fff"/><rect x="14" y="11" width="1" height="1" fill="#000"/><rect x="8" y="12" width="1" height="1" fill="#000"/><rect x="9" y="12" width="5" height="1" fill="#fff"/><rect x="14" y="12" width="1" height="1" fill="#000"/><rect x="8" y="13" width="1" height="1" fill="#000"/><rect x="9" y="13" width="1" height="1" fill="#fff"/><rect x="10" y="13" width="3" height="1" fill="#d2d2d2"/><rect x="13" y="13" width="1" height="1" fill="#fff"/><rect x="14" y="13" width="1" height="1" fill="#000"/><rect x="8" y="14" width="1" height="1" fill="#000"/><rect x="9" y="14" width="5" height="1" fill="#fff"/><rect x="14" y="14" width="1" height="1" fill="#000"/><rect x="8" y="15" width="7" height="1" fill="#000"/></svg></div>
<span id="t33" class="tx " style="left:22.0px;top:1px;letter-spacing:-0.307px;">Spiral Stair</span>
</div>
<div class="row" style="top:340px;width:308px;">
<div class="ic"><svg style="left:0;top:0" width="16" height="17" viewBox="0 0 16 17" shape-rendering="crispEdges"><rect x="5" y="1" width="1" height="1" fill="#fff"/><rect x="7" y="1" width="1" height="1" fill="#333"/><rect x="9" y="1" width="1" height="1" fill="#fff"/><rect x="4" y="2" width="1" height="1" fill="#000"/><rect x="5" y="2" width="1" height="1" fill="#fff"/><rect x="6" y="2" width="1" height="1" fill="#000"/><rect x="7" y="2" width="1" height="1" fill="#ff0"/><rect x="8" y="2" width="1" height="1" fill="#000"/><rect x="9" y="2" width="1" height="1" fill="#fff"/><rect x="10" y="2" width="1" height="1" fill="#000"/><rect x="2" y="3" width="3" height="1" fill="#000"/><rect x="5" y="3" width="1" height="1" fill="#fff"/><rect x="6" y="3" width="1" height="1" fill="#000"/><rect x="7" y="3" width="1" height="1" fill="#ff0"/><rect x="8" y="3" width="1" height="1" fill="#000"/><rect x="9" y="3" width="1" height="1" fill="#fff"/><rect x="10" y="3" width="3" height="1" fill="#000"/><rect x="2" y="4" width="5" height="1" fill="#fff"/><rect x="7" y="4" width="1" height="1" fill="#ff0"/><rect x="8" y="4" width="5" height="1" fill="#fff"/><rect x="2" y="5" width="2" height="1" fill="#000"/><rect x="4" y="5" width="1" height="1" fill="#333"/><rect x="5" y="5" width="1" height="1" fill="#fff"/><rect x="6" y="5" width="1" height="1" fill="#000"/><rect x="7" y="5" width="1" height="1" fill="#ff0"/><rect x="8" y="5" width="1" height="1" fill="#000"/><rect x="9" y="5" width="1" height="1" fill="#fff"/><rect x="10" y="5" width="1" height="1" fill="#333"/><rect x="11" y="5" width="2" height="1" fill="#000"/><rect x="2" y="6" width="3" height="1" fill="#000"/><rect x="5" y="6" width="1" height="1" fill="#fff"/><rect x="6" y="6" width="1" height="1" fill="#000"/><rect x="7" y="6" width="1" height="1" fill="#ff0"/><rect x="8" y="6" width="1" height="1" fill="#000"/><rect x="9" y="6" width="1" height="1" fill="#fff"/><rect x="10" y="6" width="3" height="1" fill="#000"/><rect x="2" y="7" width="5" height="1" fill="#fff"/><rect x="7" y="7" width="1" height="1" fill="#ff0"/><rect x="8" y="7" width="5" height="1" fill="#fff"/><rect x="1" y="8" width="3" height="1" fill="#000"/><rect x="4" y="8" width="1" height="1" fill="#fff"/><rect x="5" y="8" width="2" height="1" fill="#000"/><rect x="7" y="8" width="1" height="1" fill="#ff0"/><rect x="8" y="8" width="2" height="1" fill="#000"/><rect x="10" y="8" width="1" height="1" fill="#fff"/><rect x="11" y="8" width="3" height="1" fill="#000"/><rect x="1" y="9" width="3" height="1" fill="#000"/><rect x="4" y="9" width="1" height="1" fill="#fff"/><rect x="5" y="9" width="2" height="1" fill="#000"/><rect x="7" y="9" width="1" height="1" fill="#ff0"/><rect x="8" y="9" width="2" height="1" fill="#000"/><rect x="10" y="9" width="1" height="1" fill="#fff"/><rect x="11" y="9" width="3" height="1" fill="#000"/><rect x="1" y="10" width="6" height="1" fill="#fff"/><rect x="7" y="10" width="1" height="1" fill="#ff0"/><rect x="8" y="10" width="6" height="1" fill="#fff"/><rect x="1" y="11" width="2" height="1" fill="#000"/><rect x="3" y="11" width="1" height="1" fill="#fff"/><rect x="4" y="11" width="3" height="1" fill="#000"/><rect x="7" y="11" width="1" height="1" fill="#ff0"/><rect x="8" y="11" width="3" height="1" fill="#000"/><rect x="11" y="11" width="1" height="1" fill="#fff"/><rect x="12" y="11" width="2" height="1" fill="#000"/><rect x="1" y="12" width="1" height="1" fill="#000"/><rect x="2" y="12" width="1" height="1" fill="#fff"/><rect x="3" y="12" width="1" height="1" fill="#000"/><rect x="4" y="12" width="1" height="1" fill="#fff"/><rect x="5" y="12" width="2" height="1" fill="#000"/><rect x="7" y="12" width="1" height="1" fill="#ff0"/><rect x="8" y="12" width="2" height="1" fill="#000"/><rect x="10" y="12" width="1" height="1" fill="#fff"/><rect x="11" y="12" width="1" height="1" fill="#000"/><rect x="12" y="12" width="1" height="1" fill="#fff"/><rect x="13" y="12" width="1" height="1" fill="#000"/><rect x="1" y="13" width="6" height="1" fill="#fff"/><rect x="7" y="13" width="1" height="1" fill="#ff0"/><rect x="8" y="13" width="6" height="1" fill="#fff"/><rect x="1" y="14" width="1" height="1" fill="#000"/><rect x="2" y="14" width="1" height="1" fill="#fff"/><rect x="3" y="14" width="1" height="1" fill="#000"/><rect x="7" y="14" width="1" height="1" fill="#ff0"/><rect x="11" y="14" width="1" height="1" fill="#000"/><rect x="12" y="14" width="1" height="1" fill="#fff"/><rect x="13" y="14" width="1" height="1" fill="#000"/></svg></div>
<span id="t34" class="tx " style="left:22.0px;top:1px;letter-spacing:-0.158px;">Stair By Linework</span>
</div>
<div class="row" style="top:357px;width:308px;">
<div class="ic"><svg style="left:0;top:0" width="16" height="17" viewBox="0 0 16 17" shape-rendering="crispEdges"><rect x="8" y="2" width="3" height="1" fill="#000"/><rect x="6" y="3" width="2" height="1" fill="#000"/><rect x="8" y="3" width="2" height="1" fill="#fff"/><rect x="10" y="3" width="3" height="1" fill="#000"/><rect x="5" y="4" width="1" height="1" fill="#000"/><rect x="6" y="4" width="2" height="1" fill="#fff"/><rect x="8" y="4" width="1" height="1" fill="#8a8a8a"/><rect x="9" y="4" width="3" height="1" fill="#fff"/><rect x="12" y="4" width="2" height="1" fill="#000"/><rect x="5" y="5" width="1" height="1" fill="#000"/><rect x="6" y="5" width="1" height="1" fill="#fff"/><rect x="7" y="5" width="2" height="1" fill="#8a8a8a"/><rect x="9" y="5" width="1" height="1" fill="#fff"/><rect x="10" y="5" width="1" height="1" fill="#8a8a8a"/><rect x="11" y="5" width="3" height="1" fill="#fff"/><rect x="14" y="5" width="1" height="1" fill="#000"/><rect x="5" y="6" width="1" height="1" fill="#000"/><rect x="6" y="6" width="2" height="1" fill="#fff"/><rect x="8" y="6" width="2" height="1" fill="#8a8a8a"/><rect x="10" y="6" width="1" height="1" fill="#fff"/><rect x="11" y="6" width="3" height="1" fill="#000"/><rect x="5" y="7" width="1" height="1" fill="#000"/><rect x="6" y="7" width="1" height="1" fill="#fff"/><rect x="7" y="7" width="3" height="1" fill="#8a8a8a"/><rect x="10" y="7" width="1" height="1" fill="#fff"/><rect x="11" y="7" width="1" height="1" fill="#000"/><rect x="3" y="8" width="3" height="1" fill="#000"/><rect x="6" y="8" width="2" height="1" fill="#fff"/><rect x="8" y="8" width="2" height="1" fill="#8a8a8a"/><rect x="10" y="8" width="1" height="1" fill="#fff"/><rect x="11" y="8" width="1" height="1" fill="#000"/><rect x="2" y="9" width="1" height="1" fill="#000"/><rect x="3" y="9" width="3" height="1" fill="#fff"/><rect x="6" y="9" width="2" height="1" fill="#8a8a8a"/><rect x="8" y="9" width="3" height="1" fill="#fff"/><rect x="11" y="9" width="1" height="1" fill="#000"/><rect x="1" y="10" width="1" height="1" fill="#000"/><rect x="2" y="10" width="3" height="1" fill="#fff"/><rect x="5" y="10" width="3" height="1" fill="#8a8a8a"/><rect x="8" y="10" width="2" height="1" fill="#fff"/><rect x="10" y="10" width="1" height="1" fill="#000"/><rect x="1" y="11" width="1" height="1" fill="#000"/><rect x="2" y="11" width="1" height="1" fill="#fff"/><rect x="3" y="11" width="2" height="1" fill="#8a8a8a"/><rect x="5" y="11" width="1" height="1" fill="#fff"/><rect x="6" y="11" width="2" height="1" fill="#8a8a8a"/><rect x="8" y="11" width="1" height="1" fill="#fff"/><rect x="9" y="11" width="1" height="1" fill="#000"/><rect x="1" y="12" width="1" height="1" fill="#000"/><rect x="2" y="12" width="2" height="1" fill="#fff"/><rect x="4" y="12" width="2" height="1" fill="#8a8a8a"/><rect x="6" y="12" width="2" height="1" fill="#fff"/><rect x="8" y="12" width="1" height="1" fill="#000"/><rect x="2" y="13" width="1" height="1" fill="#000"/><rect x="3" y="13" width="2" height="1" fill="#fff"/><rect x="5" y="13" width="2" height="1" fill="#8a8a8a"/><rect x="7" y="13" width="1" height="1" fill="#fff"/><rect x="8" y="13" width="1" height="1" fill="#000"/><rect x="3" y="14" width="2" height="1" fill="#000"/><rect x="5" y="14" width="3" height="1" fill="#fff"/><rect x="8" y="14" width="1" height="1" fill="#000"/><rect x="5" y="15" width="3" height="1" fill="#000"/></svg></div>
<span id="t35" class="tx " style="left:22.0px;top:1px;letter-spacing:-0.154px;">Straight Stair</span>
</div>
<div class="abs" style="left:3px;top:374px;width:7px;height:2px;background:#000;"></div><div class="abs" style="left:11px;top:374px;width:7px;height:2px;background:#000;"></div>
<div class="sb" style="left:308px;top:0;height:376px;">
<svg style="left:4px;top:6px" width="9" height="6" viewBox="0 0 9 6"><path d="M1 5L4.5 1.5L8 5" stroke="#606060" stroke-width="1.8" fill="none"/></svg>
<div class="thumb" style="left:1px;top:277px;width:15px;height:17px;"></div>
<svg style="left:4px;top:364px" width="9" height="6" viewBox="0 0 9 6"><path d="M1 1L4.5 4.5L8 1" stroke="#606060" stroke-width="1.8" fill="none"/></svg>
</div>
</div>
<div class="btn" style="left:367px;top:275px;width:97px;height:26px;"></div>
<span id="t36" class="tx " style="left:395px;top:280px;letter-spacing:0.249px;">Add &gt;&gt;</span>
<div class="btn" style="left:367px;top:307px;width:97px;height:26px;"></div>
<span id="t37" class="tx " style="left:384.5px;top:312px;letter-spacing:0.050px;">&lt;&lt; Remove</span>
<div class="combo" style="left:475px;top:117px;width:298px;height:23px;"></div>
<span id="t38" class="tx " style="left:478px;top:121px;letter-spacing:-0.032px;">Main Tabs</span>
<div class="cbtn" style="left:765px;top:117px;width:16px;height:23px;"></div>
<svg style="left:771px;top:127px" width="5" height="3" viewBox="0 0 5 3" shape-rendering="crispEdges"><path d="M0 0H5V1H4V2H3V3H2V2H1V1H0Z" fill="#fff"/></svg>
<div class="list" style="left:477px;top:147px;width:304px;height:270px;">
<div class="abs" style="left:0;top:0;width:283px;height:17px;background:#f0f0f5;"></div>
<span id="t39" class="tx " style="left:2.5px;top:1px;color:#1e1e1e;font-weight:bold;letter-spacing:-0.400px;">Main Tabs</span>
<div class="pm" style="left:4px;top:21px;"></div>
<div class="cb" style="left:18px;top:18px;"><svg style="left:0;top:0" width="11" height="11" viewBox="0 0 11 11"><path d="M1.8 5.2L4.2 8.0L9.6 2.2" stroke="#3a3a3a" stroke-width="1.3" fill="none"/></svg></div>
<span id="t40" class="tx " style="left:35.8px;top:18px;letter-spacing:-0.238px;">File</span>
<div class="pm" style="left:4px;top:38px;"></div>
<div class="cb" style="left:18px;top:35px;"><svg style="left:0;top:0" width="11" height="11" viewBox="0 0 11 11"><path d="M1.8 5.2L4.2 8.0L9.6 2.2" stroke="#3a3a3a" stroke-width="1.3" fill="none"/></svg></div>
<span id="t41" class="tx " style="left:35.8px;top:35px;letter-spacing:-0.172px;">Edit</span>
<div class="pm" style="left:4px;top:55px;"></div>
<div class="cb" style="left:18px;top:52px;"><svg style="left:0;top:0" width="11" height="11" viewBox="0 0 11 11"><path d="M1.8 5.2L4.2 8.0L9.6 2.2" stroke="#3a3a3a" stroke-width="1.3" fill="none"/></svg></div>
<span id="t42" class="tx " style="left:35.8px;top:52px;letter-spacing:-0.127px;">View</span>
<div class="abs" style="left:17px;top:68px;width:266px;height:17px;background:#8cabdc;"></div>
<div class="pm" style="left:4px;top:72px;"></div>
<div class="cb" style="left:18px;top:69px;"><svg style="left:0;top:0" width="11" height="11" viewBox="0 0 11 11"><path d="M1.8 5.2L4.2 8.0L9.6 2.2" stroke="#3a3a3a" stroke-width="1.3" fill="none"/></svg></div>
<span id="t43" class="tx " style="left:35.8px;top:69px;color:#000;letter-spacing:-0.178px;">Workspace</span>
<div class="pm" style="left:4px;top:89px;"></div>
<div class="cb" style="left:18px;top:86px;"><svg style="left:0;top:0" width="11" height="11" viewBox="0 0 11 11"><path d="M1.8 5.2L4.2 8.0L9.6 2.2" stroke="#3a3a3a" stroke-width="1.3" fill="none"/></svg></div>
<span id="t44" class="tx " style="left:35.8px;top:86px;letter-spacing:-0.201px;">Draw</span>
<div class="pm" style="left:4px;top:106px;"></div>
<div class="cb" style="left:18px;top:103px;"><svg style="left:0;top:0" width="11" height="11" viewBox="0 0 11 11"><path d="M1.8 5.2L4.2 8.0L9.6 2.2" stroke="#3a3a3a" stroke-width="1.3" fill="none"/></svg></div>
<span id="t45" class="tx " style="left:35.8px;top:103px;letter-spacing:-0.086px;">Insert</span>
<div class="pm" style="left:4px;top:123px;"></div>
<div class="cb" style="left:18px;top:120px;"><svg style="left:0;top:0" width="11" height="11" viewBox="0 0 11 11"><path d="M1.8 5.2L4.2 8.0L9.6 2.2" stroke="#3a3a3a" stroke-width="1.3" fill="none"/></svg></div>
<span id="t46" class="tx " style="left:35.8px;top:120px;letter-spacing:0.097px;">Architecture</span>
<div class="pm" style="left:4px;top:140px;"></div>
<div class="cb" style="left:18px;top:137px;"><svg style="left:0;top:0" width="11" height="11" viewBox="0 0 11 11"><path d="M1.8 5.2L4.2 8.0L9.6 2.2" stroke="#3a3a3a" stroke-width="1.3" fill="none"/></svg></div>
<span id="t47" class="tx " style="left:35.8px;top:137px;letter-spacing:-0.003px;">Format</span>
<div class="pm" style="left:4px;top:157px;"></div>
<div class="cb" style="left:18px;top:154px;"><svg style="left:0;top:0" width="11" height="11" viewBox="0 0 11 11"><path d="M1.8 5.2L4.2 8.0L9.6 2.2" stroke="#3a3a3a" stroke-width="1.3" fill="none"/></svg></div>
<span id="t48" class="tx " style="left:35.8px;top:154px;letter-spacing:0.054px;">Tools</span>
<div class="pm" style="left:4px;top:174px;"></div>
<div class="cb" style="left:18px;top:171px;"><svg style="left:0;top:0" width="11" height="11" viewBox="0 0 11 11"><path d="M1.8 5.2L4.2 8.0L9.6 2.2" stroke="#3a3a3a" stroke-width="1.3" fill="none"/></svg></div>
<span id="t49" class="tx " style="left:35.8px;top:171px;letter-spacing:-0.009px;">New Tab (Custom)</span>
<div class="pm" style="left:4px;top:191px;"></div>
<div class="cb" style="left:18px;top:188px;"><svg style="left:0;top:0" width="11" height="11" viewBox="0 0 11 11"><path d="M1.8 5.2L4.2 8.0L9.6 2.2" stroke="#3a3a3a" stroke-width="1.3" fill="none"/></svg></div>
<span id="t50" class="tx " style="left:35.8px;top:188px;letter-spacing:0.443px;">Modify</span>
<div class="pm" style="left:4px;top:208px;"></div>
<div class="cb" style="left:18px;top:205px;"><svg style="left:0;top:0" width="11" height="11" viewBox="0 0 11 11"><path d="M1.8 5.2L4.2 8.0L9.6 2.2" stroke="#3a3a3a" stroke-width="1.3" fill="none"/></svg></div>
<span id="t51" class="tx " style="left:35.8px;top:205px;letter-spacing:0.148px;">Add-Ons</span>
<div class="pm" style="left:4px;top:225px;"></div>
<div class="cb" style="left:18px;top:222px;"><svg style="left:0;top:0" width="11" height="11" viewBox="0 0 11 11"><path d="M1.8 5.2L4.2 8.0L9.6 2.2" stroke="#3a3a3a" stroke-width="1.3" fill="none"/></svg></div>
<span id="t52" class="tx " style="left:35.8px;top:222px;letter-spacing:0.076px;">Modes</span>
<div class="pm" style="left:4px;top:242px;"></div>
<div class="cb" style="left:18px;top:239px;"><svg style="left:0;top:0" width="11" height="11" viewBox="0 0 11 11"><path d="M1.8 5.2L4.2 8.0L9.6 2.2" stroke="#3a3a3a" stroke-width="1.3" fill="none"/></svg></div>
<span id="t53" class="tx " style="left:35.8px;top:239px;letter-spacing:0.104px;">Options</span>
<div class="pm" style="left:4px;top:259px;"></div>
<div class="cb" style="left:18px;top:256px;"><svg style="left:0;top:0" width="11" height="11" viewBox="0 0 11 11"><path d="M1.8 5.2L4.2 8.0L9.6 2.2" stroke="#3a3a3a" stroke-width="1.3" fill="none"/></svg></div>
<span id="t54" class="tx " style="left:35.8px;top:256px;letter-spacing:0.252px;">Window</span>
<div class="sb" style="left:283px;top:0;height:266px;">
<svg style="left:4px;top:6px" width="9" height="6" viewBox="0 0 9 6"><path d="M1 5L4.5 1.5L8 5" stroke="#606060" stroke-width="1.8" fill="none"/></svg>
<div class="thumb" style="left:1px;top:17px;width:15px;height:214px;"></div>
<svg style="left:4px;top:255px" width="9" height="6" viewBox="0 0 9 6"><path d="M1 1L4.5 4.5L8 1" stroke="#606060" stroke-width="1.8" fill="none"/></svg>
</div>
</div>
<div class="btn" style="left:801px;top:275px;width:36px;height:26px;"></div>
<div class="btn" style="left:801px;top:307px;width:36px;height:26px;"></div>
<svg style="left:815.5px;top:284px" width="10" height="7" viewBox="0 0 10 7"><path d="M5 0.9L9.2 5.8H0.8Z" fill="#000" stroke="#fff" stroke-width="1.1"/></svg>
<svg style="left:815.5px;top:316.5px" width="10" height="7" viewBox="0 0 10 7"><path d="M5 5.8L9.2 0.9H0.8Z" fill="#000" stroke="#fff" stroke-width="1.1"/></svg>
<div class="abs" style="left:802px;top:273px;width:38px;height:65px;border:3px solid #f84444;"></div>
<div class="btn" style="left:477px;top:450px;width:97px;height:26px;"></div>
<span id="t55" class="tx " style="left:502px;top:455px;letter-spacing:-0.041px;">New Tab</span>
<div class="btn" style="left:582px;top:450px;width:97px;height:26px;"></div>
<span id="t56" class="tx " style="left:600px;top:455px;letter-spacing:-0.078px;">New Group</span>
<div class="btn" style="left:687px;top:450px;width:97px;height:26px;"></div>
<span id="t57" class="tx " style="left:714px;top:455px;letter-spacing:-0.277px;">Rename</span>
<span id="t58" class="tx " style="left:481px;top:488px;letter-spacing:-0.071px;">Customizations:</span>
<div class="btn" style="left:582px;top:484px;width:144px;height:26px;"></div>
<span id="t59" class="tx " style="left:603px;top:489px;letter-spacing:0.069px;">Import Ribbon...</span>
<svg style="left:710px;top:495px" width="10" height="6" viewBox="0 0 10 6"><path d="M0 0H10L5 6Z" fill="#fff"/></svg>
<div class="btn" style="left:694px;top:559px;width:81px;height:25px;"></div>
<span id="t60" class="tx " style="left:720.5px;top:564px;letter-spacing:-0.277px;">Close</span>
<div class="btn" style="left:781px;top:559px;width:81px;height:25px;"></div>
<span id="t61" class="tx " style="left:809.5px;top:564px;letter-spacing:0.078px;">Help</span>
<div class="win"></div>
</body></html>
